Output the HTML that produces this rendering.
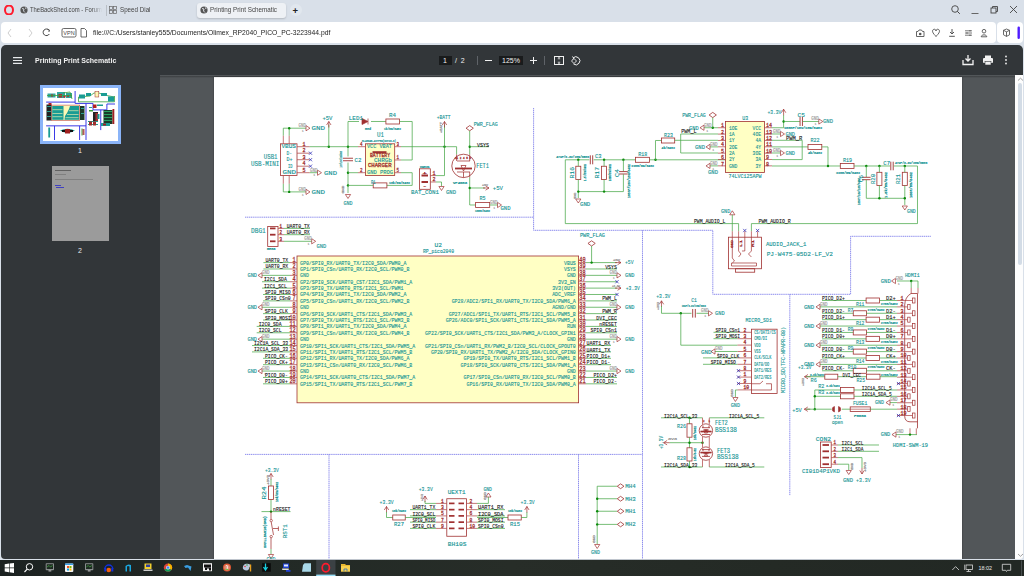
<!DOCTYPE html>
<html><head><meta charset="utf-8">
<style>
*{margin:0;padding:0;box-sizing:border-box}
html,body{width:1024px;height:576px;overflow:hidden;background:#d9e0e9;font-family:"Liberation Sans",sans-serif}
.abs{position:absolute}
#tabbar{left:0;top:0;width:1024px;height:22px;background:#d9e0e9}
#addr{left:1px;top:22px;width:995px;height:21px;background:#fff;border-radius:4px}
#addr2{left:997px;top:22px;width:26px;height:21px;background:#fff;border-radius:4px}
#tb{left:1px;top:45px;width:1022px;height:30.5px;background:#323639;border-radius:5px 5px 0 0}
#side{left:1px;top:75px;width:159px;height:483.8px;background:#323639;border-bottom-left-radius:4px}
#main{left:160px;top:75px;width:855px;height:483.8px;background:#525659}
#page{left:214px;top:77px;width:748px;height:481.8px;background:#fff;box-shadow:0 0 1.5px rgba(0,0,0,0.45)}
#scroll{left:1015px;top:75px;width:8px;height:484px;background:#fdfdfd;border-bottom-right-radius:3px}
#task{left:0;top:560px;width:1024px;height:16px;background:linear-gradient(90deg,#1c2221 0%,#232a26 30%,#272d28 50%,#242a25 75%,#222824 100%)}
.t{position:absolute;white-space:nowrap;line-height:1}
</style></head><body>
<div id="tabbar" class="abs"></div>
<!-- tabs -->
<svg class="abs" style="left:4px;top:5px" width="10" height="10" viewBox="0 0 10 10"><ellipse cx="5" cy="5" rx="4" ry="4.6" fill="none" stroke="#ff1b2d" stroke-width="2"/></svg>
<svg class="abs" style="left:20px;top:6px" width="8" height="8" viewBox="0 0 8 8"><circle cx="4" cy="4" r="3.6" fill="#555"/><path d="M2 2.5 L4 3 L3.5 5 L5 6.5 M5.5 1.5 L6 3" stroke="#dde3ea" stroke-width="0.9" fill="none"/></svg>
<div class="t" style="left:30px;top:6px;font-size:7px;color:#444;width:86px;overflow:hidden;transform:scaleX(0.84);transform-origin:0 0;-webkit-mask-image:linear-gradient(to right,#000 85%,transparent)">TheBackShed.com - Forum</div>
<div class="abs" style="left:106px;top:5px;width:1px;height:11px;background:#b9bfc6"></div>
<svg class="abs" style="left:109px;top:6px" width="8" height="8" viewBox="0 0 8 8"><rect x="0.5" y="0.5" width="3" height="3" fill="none" stroke="#666" stroke-width="0.7"/><rect x="4.5" y="0.5" width="3" height="3" fill="none" stroke="#666" stroke-width="0.7"/><rect x="0.5" y="4.5" width="3" height="3" fill="none" stroke="#666" stroke-width="0.7"/><rect x="4.5" y="4.5" width="3" height="3" fill="none" stroke="#666" stroke-width="0.7"/></svg>
<div class="t" style="left:119.5px;top:6px;font-size:7px;color:#444;transform:scaleX(0.89);transform-origin:0 0">Speed Dial</div>
<div class="abs" style="left:197px;top:3px;width:89px;height:15px;background:#eef1f5;border-radius:3px;box-shadow:0 1px 2px rgba(0,0,0,0.18)"></div>
<svg class="abs" style="left:200px;top:6px" width="8" height="8" viewBox="0 0 8 8"><circle cx="4" cy="4" r="3.6" fill="#555"/><path d="M2 2.5 L4 3 L3.5 5 L5 6.5 M5.5 1.5 L6 3" stroke="#eef1f5" stroke-width="0.9" fill="none"/></svg>
<div class="t" style="left:210px;top:6px;font-size:7px;color:#444;transform:scaleX(0.897);transform-origin:0 0">Printing Print Schematic</div>
<div class="abs" style="left:290px;top:4px;width:12px;height:12px;border-radius:6px;background:#e1e7ee"></div><div class="t" style="left:292.5px;top:5.5px;font-size:9.5px;color:#222;font-weight:bold">+</div>
<!-- window controls -->
<svg class="abs" style="left:950px;top:4px" width="70" height="12" viewBox="0 0 70 12"><circle cx="5" cy="5" r="3.3" fill="none" stroke="#444" stroke-width="0.9"/><path d="M7.4 7.4 L9.8 9.8" stroke="#444" stroke-width="1"/><path d="M21.5 9.5 H28.5" stroke="#666" stroke-width="1"/><rect x="41" y="4" width="5" height="5" fill="none" stroke="#444" stroke-width="0.9"/><path d="M42.5 4 V2.5 H47.5 V7.5 H46" fill="none" stroke="#444" stroke-width="0.9"/><path d="M60 2 L67 9 M67 2 L60 9" stroke="#444" stroke-width="0.9"/></svg>
<!-- address bar -->
<div id="addr" class="abs"></div>
<div id="addr2" class="abs"></div>
<svg class="abs" style="left:6px;top:27px" width="90" height="12" viewBox="0 0 90 12"><path d="M5 2 L2 6 L5 10" fill="none" stroke="#c8c8c8" stroke-width="0.9"/><path d="M23 2 L26 6 L23 10" fill="none" stroke="#c8c8c8" stroke-width="0.9"/><path d="M43 3.2 A3.3 3.3 0 1 0 43.3 7" fill="none" stroke="#444" stroke-width="1"/><path d="M41.5 2.2 L43.6 3.2 L42.8 5" fill="none" stroke="#444" stroke-width="0.9"/><rect x="56" y="1.5" width="14" height="8.5" rx="1.5" fill="none" stroke="#444" stroke-width="0.8"/><text x="63" y="8.3" font-size="5.5" text-anchor="middle" fill="#444" font-family="Liberation Sans">VPN</text><path d="M75 1.5 H78.5 L80.5 3.5 V10 H75 Z" fill="none" stroke="#444" stroke-width="0.8"/></svg>
<div class="t" style="left:93px;top:29px;font-size:7.2px;color:#222;transform:scaleX(0.94);transform-origin:0 0">file:///C:/Users/stanley555/Documents/Olimex_RP2040_PICO_PC-3223944.pdf</div>
<svg class="abs" style="left:912px;top:26px" width="110" height="14" viewBox="0 0 110 14"><path d="M4.5 5.5 H6 L7 4 H9.5 L10.5 5.5 H12 V10.5 H4.5 Z" fill="none" stroke="#555" stroke-width="0.9"/><circle cx="8.2" cy="8" r="1.3" fill="#555"/><path d="M20.5 5.2 C20.5 2.6,24 2.6,24 5 C24 2.6,27.5 2.6,27.5 5.2 C27.5 7.6,24 9.8,24 10.6 C24 9.8,20.5 7.6,20.5 5.2Z" fill="none" stroke="#555" stroke-width="0.9"/><path d="M40 3 V8 M38 6 L40 8 L42 6 M37.2 10.3 H42.8" fill="none" stroke="#555" stroke-width="1"/><path d="M53 4.8 H60 M53 7 H60 M53 9.2 H60" stroke="#555" stroke-width="0.8"/><circle cx="58" cy="4.8" r="0.7" fill="#555"/><circle cx="55" cy="7" r="0.7" fill="#555"/><circle cx="58" cy="9.2" r="0.7" fill="#555"/><circle cx="72" cy="5.2" r="1.8" fill="none" stroke="#555" stroke-width="0.9"/><path d="M69.2 10.8 C69.2 8.2,74.8 8.2,74.8 10.8 Z" fill="none" stroke="#555" stroke-width="0.9"/><path d="M91.5 4.3 L94.5 3 L97.5 4.3 V8.8 L94.5 10.4 L91.5 8.8Z M91.5 4.3 L94.5 5.8 L97.5 4.3 M94.5 5.8 V10.4" fill="none" stroke="#444" stroke-width="0.8"/><rect x="105.5" y="0.5" width="2.4" height="12.5" rx="1.2" fill="#4f1bff"/></svg>
<!-- pdf toolbar -->
<div id="tb" class="abs"></div>
<svg class="abs" style="left:13px;top:57px" width="9" height="7" viewBox="0 0 9 7"><path d="M0 0.6 H9 M0 3.5 H9 M0 6.4 H9" stroke="#e8eaed" stroke-width="1.1"/></svg>
<div class="t" style="left:35px;top:57px;font-size:8px;color:#f1f1f1;font-weight:bold;transform:scaleX(0.875);transform-origin:0 0">Printing Print Schematic</div>
<div class="abs" style="left:439px;top:56px;width:13px;height:9px;background:#191b1c"></div>
<div class="t" style="left:443px;top:57px;font-size:7px;color:#f1f1f1">1</div>
<div class="t" style="left:455px;top:57px;font-size:7px;color:#f1f1f1">/&nbsp;&nbsp;2</div>
<div class="abs" style="left:477px;top:56px;width:1px;height:9px;background:#5f6368"></div>
<div class="abs" style="left:485px;top:60px;width:7px;height:1px;background:#f1f1f1"></div>
<div class="abs" style="left:499px;top:56px;width:24px;height:9px;background:#191b1c"></div>
<div class="t" style="left:502px;top:57px;font-size:7px;color:#f1f1f1">125%</div>
<svg class="abs" style="left:529px;top:56px" width="9" height="9" viewBox="0 0 9 9"><path d="M4.5 1 V8 M1 4.5 H8" stroke="#f1f1f1" stroke-width="1"/></svg>
<div class="abs" style="left:544px;top:56px;width:1px;height:9px;background:#5f6368"></div>
<svg class="abs" style="left:553px;top:55px" width="30" height="11" viewBox="0 0 30 11"><rect x="1.5" y="1.5" width="9" height="8" fill="none" stroke="#f1f1f1" stroke-width="1"/><path d="M6 2.5 V4.5 M4.8 3.5 L6 2.5 L7.2 3.5 M6 8.5 V6.5 M4.8 7.5 L6 8.5 L7.2 7.5" stroke="#f1f1f1" stroke-width="0.8" fill="none"/><path d="M20 3 A4 4 0 1 1 20.5 9" fill="none" stroke="#f1f1f1" stroke-width="1"/><path d="M18.5 6 L21 3.5 L23.5 6 L21 8.5Z" fill="none" stroke="#f1f1f1" stroke-width="0.9"/><path d="M19 1.5 L21 3 L19.5 4.5" fill="none" stroke="#f1f1f1" stroke-width="0.8"/></svg>
<svg class="abs" style="left:962px;top:54px" width="50" height="12" viewBox="0 0 50 12"><path d="M1 6 V10.5 H11 V6" fill="none" stroke="#f1f1f1" stroke-width="1.3"/><path d="M6 1 V7 M3.5 4.5 L6 7 L8.5 4.5" fill="none" stroke="#f1f1f1" stroke-width="1.3"/><rect x="21" y="4" width="10" height="5" rx="1" fill="#f1f1f1"/><rect x="23" y="1.5" width="6" height="2.5" fill="#f1f1f1"/><rect x="23" y="7.5" width="6" height="3.5" fill="#f1f1f1" stroke="#323639" stroke-width="0.6"/><circle cx="44" cy="2.5" r="0.9" fill="#f1f1f1"/><circle cx="44" cy="6" r="0.9" fill="#f1f1f1"/><circle cx="44" cy="9.5" r="0.9" fill="#f1f1f1"/></svg>
<div id="side" class="abs"></div>
<div class="abs" style="left:40px;top:85px;width:81px;height:59px;background:#8ab4f8"></div>
<div class="abs" style="left:43px;top:88px;width:75px;height:53px;background:#fff"></div>
<svg class="abs" style="left:0;top:0" width="130" height="150" viewBox="0 0 130 150">
<g fill="none" stroke="#3b3be6" stroke-width="1">
<polyline points="75.1,91 75.1,103.4 93,103.4 93,109.9 106.9,109.9 106.9,104 115,104"/>
<line x1="46.1" y1="102.1" x2="75.1" y2="102.1"/>
<line x1="86" y1="103.4" x2="86" y2="140"/>
<line x1="100.75" y1="109.9" x2="100.75" y2="130.1"/>
<line x1="46.1" y1="125.85" x2="86" y2="125.85"/>
<line x1="54.5" y1="125.85" x2="54.5" y2="140"/>
<line x1="79.6" y1="125.85" x2="79.6" y2="140"/>
</g>
<rect x="51.5" y="105.1" width="28.2" height="15.5" fill="#fdf7b4" stroke="#c05050" stroke-width="0.6"/>
<path d="M52.2 106 H63.5 V119.8 H52.2Z" fill="#1a9c94"/>
<path d="M70 106 H79 V119.8 H64.5 L65 116 L67 113 L69 109Z" fill="#1a9c94"/>
<g fill="#fdf7b4"><rect x="52.5" y="109.5" width="10" height="0.6"/><rect x="52.5" y="113" width="10" height="0.6"/><rect x="52.5" y="116.5" width="10" height="0.6"/><rect x="69" y="110.5" width="9.5" height="0.6"/><rect x="67" y="114" width="11.5" height="0.6"/><rect x="65.5" y="117.5" width="13" height="0.6"/></g>
<rect x="46.5" y="104.5" width="4.8" height="16" fill="#222"/>
<rect x="47" y="106" width="4" height="1" fill="#2aa090"/><rect x="47" y="111" width="4" height="1" fill="#2aa090"/><rect x="47" y="116" width="4" height="1" fill="#2aa090"/>
<rect x="80" y="106" width="4.5" height="14" fill="#1e3a2a"/>
<rect x="81" y="108" width="3" height="1" fill="#2aa090"/><rect x="81" y="113" width="3" height="1" fill="#2aa090"/>
<rect x="48.5" y="103" width="3" height="2" fill="#b02020"/>
<g fill="#1a9c94" opacity="0.9"><rect x="47.5" y="93.5" width="8" height="4"/><rect x="57" y="92" width="8" height="6"/><rect x="66" y="93" width="6" height="5"/></g>
<g fill="#b03030"><circle cx="52" cy="95.5" r="1.2"/><rect x="58.5" y="94" width="3.5" height="3.5"/><circle cx="64.5" cy="96.5" r="1.2"/><circle cx="68" cy="96" r="1.1"/></g>
<g stroke="#3aa03a" stroke-width="0.8" fill="none"><polyline points="47,95.5 72,95.5"/><polyline points="63,93 70,92 72,99"/><polyline points="78.5,97 78.5,101.8 114.5,101.8 114.5,96"/><polyline points="78.5,97 90,96 94,93 99,93 104,95 114.5,97"/></g>
<g fill="#1a9c94"><rect x="79" y="94.5" width="6" height="4"/><rect x="86" y="93" width="5" height="3"/><rect x="101" y="93" width="6" height="3"/><rect x="108" y="96.5" width="6" height="5"/></g>
<rect x="95" y="91.5" width="3.8" height="5.5" fill="#fdf7b4" stroke="#a03030" stroke-width="0.5"/>
<rect x="93" y="104.5" width="3.5" height="3.5" fill="#b02020"/>
<rect x="97" y="104.5" width="6" height="1.5" fill="#1a9c94"/>
<rect x="89" y="107" width="3" height="1" fill="#2aa090"/>
<g fill="#1a3a2a"><rect x="103.5" y="110" width="9" height="14"/></g>
<g fill="#2aa060"><rect x="104" y="111" width="8" height="1"/><rect x="104" y="114" width="8" height="1"/><rect x="104" y="117" width="8" height="1"/><rect x="104" y="120" width="8" height="1"/></g>
<rect x="112.5" y="109" width="1.8" height="15" fill="#a02020"/>
<rect x="101" y="123" width="9" height="3" fill="#1a9c94"/>
<rect x="103" y="123.5" width="3" height="2" fill="#a02020"/>
<rect x="93" y="112" width="5" height="9" fill="#222"/><rect x="95.5" y="113" width="2.5" height="9" fill="#a03030"/>
<rect x="97.5" y="114" width="2" height="5" fill="#1a9c94"/>
<rect x="89" y="110" width="4" height="1.5" fill="#3aa03a"/>
<g fill="#1a9c94"><rect x="88" y="121" width="10" height="1"/><rect x="88" y="124" width="10" height="1"/></g>
<g fill="#a03030"><rect x="89" y="121.5" width="3" height="4"/><rect x="93" y="121.5" width="3" height="4"/></g>
<rect x="48.3" y="127.5" width="1.8" height="10" fill="#1a9c94"/>
<path d="M60 130.5 Q67.5 127 75 130.5 Q67.5 135 60 130.5Z" fill="#1a9c94"/>
<rect x="65" y="129" width="5" height="4.5" fill="#a02020"/><rect x="62" y="130" width="3" height="2" fill="#111"/><rect x="70" y="130" width="3" height="2" fill="#111"/>
<rect x="81.5" y="128.5" width="1" height="7" fill="#3aa03a"/><rect x="82.5" y="129" width="2" height="6" fill="#a03030" opacity="0.8"/>
</svg>
<div class="t" style="left:78px;top:147px;font-size:7px;color:#e8eaed">1</div>
<div class="abs" style="left:52px;top:166px;width:57px;height:75px;background:#9b9b9b"></div>
<div class="abs" style="left:55px;top:170px;width:16px;height:1px;background:#606060"></div>
<div class="abs" style="left:55px;top:174px;width:11px;height:0.6px;background:#808080"></div>
<div class="abs" style="left:55px;top:179px;width:38px;height:0.6px;background:#808080"></div>
<div class="abs" style="left:55px;top:185px;width:6px;height:0.8px;background:#4040c0"></div>
<div class="abs" style="left:56px;top:187px;width:8px;height:0.8px;background:#4040c0"></div>
<div class="t" style="left:78px;top:247px;font-size:7px;color:#e8eaed">2</div>
<div id="main" class="abs"></div>
<div id="scroll" class="abs"></div>
<div class="abs" style="left:1017.5px;top:83px;width:4px;height:182px;background:#d3dce6;border-radius:2px"></div>
<svg class="abs" style="left:1015px;top:77px" width="9" height="483" viewBox="0 0 9 483"><path d="M3 3.5 L5.5 1.2 L8 3.5" fill="none" stroke="#888" stroke-width="0.8"/><path d="M3 477 L5.5 479.3 L8 477" fill="none" stroke="#888" stroke-width="0.8"/></svg>
<div id="page" class="abs"></div>
<div class="abs" style="left:160px;top:75.5px;width:855px;height:2.5px;background:linear-gradient(rgba(0,0,0,0.28),rgba(0,0,0,0))"></div>
<svg class="abs" style="left:214px;top:77px" width="748" height="481.8" viewBox="214 77 748 481.8" font-family="Liberation Mono"><rect x="280.4" y="143.8" width="16.6" height="31.8" fill="none" stroke="#a03030" stroke-width="0.8"/>
<line x1="297" y1="146.7" x2="309.7" y2="146.7" stroke="#b04848" stroke-width="0.75"/>
<text x="302.5" y="145.8" font-size="5.76" fill="#a03030" stroke="#a03030" stroke-width="0.28" textLength="3" lengthAdjust="spacingAndGlyphs">1</text>
<line x1="297" y1="153.2" x2="309.7" y2="153.2" stroke="#b04848" stroke-width="0.75"/>
<text x="302.5" y="152.3" font-size="5.76" fill="#a03030" stroke="#a03030" stroke-width="0.28" textLength="3" lengthAdjust="spacingAndGlyphs">2</text>
<line x1="297" y1="159.7" x2="309.7" y2="159.7" stroke="#b04848" stroke-width="0.75"/>
<text x="302.5" y="158.8" font-size="5.76" fill="#a03030" stroke="#a03030" stroke-width="0.28" textLength="3" lengthAdjust="spacingAndGlyphs">3</text>
<line x1="297" y1="166.2" x2="309.7" y2="166.2" stroke="#b04848" stroke-width="0.75"/>
<text x="302.5" y="165.3" font-size="5.76" fill="#a03030" stroke="#a03030" stroke-width="0.28" textLength="3" lengthAdjust="spacingAndGlyphs">4</text>
<line x1="297" y1="172.7" x2="309.7" y2="172.7" stroke="#b04848" stroke-width="0.75"/>
<text x="302.5" y="171.8" font-size="5.76" fill="#a03030" stroke="#a03030" stroke-width="0.28" textLength="3" lengthAdjust="spacingAndGlyphs">5</text>
<text x="281.5" y="148.5" font-size="5.45" fill="#159494" stroke="#159494" stroke-width="0.12" textLength="14.5" lengthAdjust="spacingAndGlyphs">VBUS</text>
<text x="286.5" y="155" font-size="5.45" fill="#159494" stroke="#159494" stroke-width="0.12" textLength="5.5" lengthAdjust="spacingAndGlyphs">D-</text>
<text x="286.5" y="161.5" font-size="5.45" fill="#159494" stroke="#159494" stroke-width="0.12" textLength="6" lengthAdjust="spacingAndGlyphs">D+</text>
<text x="288" y="168" font-size="5.45" fill="#159494" stroke="#159494" stroke-width="0.12" textLength="4.5" lengthAdjust="spacingAndGlyphs">ID</text>
<text x="282.5" y="174.5" font-size="5.45" fill="#159494" stroke="#159494" stroke-width="0.12" textLength="13.5" lengthAdjust="spacingAndGlyphs">GND</text>
<path d="M308.9 151.6 L312.1 154.8 M312.1 151.6 L308.9 154.8" stroke="#2020b0" stroke-width="0.7"/>
<path d="M308.9 158.1 L312.1 161.3 M312.1 158.1 L308.9 161.3" stroke="#2020b0" stroke-width="0.7"/>
<path d="M308.9 164.6 L312.1 167.8 M312.1 164.6 L308.9 167.8" stroke="#2020b0" stroke-width="0.7"/>
<text x="263.8" y="159.1" font-size="7.27" fill="#159494" stroke="#159494" stroke-width="0.12" textLength="13.7" lengthAdjust="spacingAndGlyphs">USB1</text>
<text x="251" y="165.7" font-size="7.27" fill="#159494" stroke="#159494" stroke-width="0.12" textLength="28.4" lengthAdjust="spacingAndGlyphs">USB-MINI</text>
<line x1="283.3" y1="143.8" x2="283.3" y2="135.6" stroke="#b04848" stroke-width="0.75"/>
<line x1="283.3" y1="175.6" x2="283.3" y2="183.8" stroke="#b04848" stroke-width="0.75"/>
<text x="282.3" y="140" font-size="3.03" fill="#159494" stroke="#159494" stroke-width="0.25" textLength="2" lengthAdjust="spacingAndGlyphs"></text>
<line x1="289.2" y1="143.8" x2="289.2" y2="135.6" stroke="#b04848" stroke-width="0.75"/>
<line x1="289.2" y1="175.6" x2="289.2" y2="183.8" stroke="#b04848" stroke-width="0.75"/>
<text x="288.2" y="140" font-size="3.03" fill="#159494" stroke="#159494" stroke-width="0.25" textLength="2" lengthAdjust="spacingAndGlyphs"></text>
<polyline fill="none" points="283.3,135.6 283.3,128.2 306,128.2" stroke="#48a848" stroke-width="0.75"/>
<line x1="289.2" y1="135.6" x2="289.2" y2="128.2" stroke="#48a848" stroke-width="0.75"/>
<circle cx="289.2" cy="128.2" r="1.2" fill="#0a8a0a"/>
<path d="M306 125.6 L310 128.2 L306 130.8 Z" fill="none" stroke="#a03030" stroke-width="0.7"/>
<text x="298.5" y="127.1" font-size="4.55" fill="#9a9a9a" stroke="#9a9a9a" stroke-width="0.12" textLength="7.5" lengthAdjust="spacingAndGlyphs">GND</text>
<text x="302" y="132" font-size="3.64" fill="#9a9a9a" stroke="#9a9a9a" stroke-width="0.25" textLength="1.5" lengthAdjust="spacingAndGlyphs">1</text>
<text x="311.5" y="130.1" font-size="5.76" fill="#159494" stroke="#159494" stroke-width="0.12" textLength="13.5" lengthAdjust="spacingAndGlyphs">GND</text>
<polyline fill="none" points="283.3,183.8 283.3,191.9 306,191.9" stroke="#48a848" stroke-width="0.75"/>
<line x1="289.2" y1="183.8" x2="289.2" y2="191.9" stroke="#48a848" stroke-width="0.75"/>
<circle cx="289.2" cy="191.9" r="1.2" fill="#0a8a0a"/>
<path d="M306 189.3 L310 191.9 L306 194.5 Z" fill="none" stroke="#a03030" stroke-width="0.7"/>
<text x="298.5" y="190.8" font-size="4.55" fill="#9a9a9a" stroke="#9a9a9a" stroke-width="0.12" textLength="7.5" lengthAdjust="spacingAndGlyphs">GND</text>
<text x="302" y="195.7" font-size="3.64" fill="#9a9a9a" stroke="#9a9a9a" stroke-width="0.25" textLength="1.5" lengthAdjust="spacingAndGlyphs">1</text>
<text x="311.5" y="193.8" font-size="5.76" fill="#159494" stroke="#159494" stroke-width="0.12" textLength="13.5" lengthAdjust="spacingAndGlyphs">GND</text>
<line x1="309.7" y1="172.7" x2="317.5" y2="172.7" stroke="#48a848" stroke-width="0.75"/>
<path d="M317.5 170.1 L321.5 172.7 L317.5 175.3 Z" fill="none" stroke="#a03030" stroke-width="0.7"/>
<text x="310" y="171.6" font-size="4.55" fill="#9a9a9a" stroke="#9a9a9a" stroke-width="0.12" textLength="7.5" lengthAdjust="spacingAndGlyphs">GND</text>
<text x="313.5" y="176.5" font-size="3.64" fill="#9a9a9a" stroke="#9a9a9a" stroke-width="0.25" textLength="1.5" lengthAdjust="spacingAndGlyphs">1</text>
<text x="324" y="174.6" font-size="5.76" fill="#159494" stroke="#159494" stroke-width="0.12" textLength="13" lengthAdjust="spacingAndGlyphs">GND</text>
<line x1="309.7" y1="146.7" x2="358" y2="146.7" stroke="#48a848" stroke-width="0.75"/>
<circle cx="328.8" cy="146.7" r="1.2" fill="#0a8a0a"/>
<circle cx="348" cy="146.7" r="1.2" fill="#0a8a0a"/>
<line x1="328.8" y1="146.7" x2="328.8" y2="124.5" stroke="#48a848" stroke-width="0.75"/>
<path d="M326.6 125 L328.8 121.5 L331 125 M328.8 121.5 V127.5" fill="none" stroke="#a03030" stroke-width="0.7"/>
<text x="322.4" y="120.3" font-size="5.76" fill="#159494" stroke="#159494" stroke-width="0.12" textLength="10.1" lengthAdjust="spacingAndGlyphs">+5V</text>
<text x="326" y="128" font-size="3.03" fill="#159494" stroke="#159494" stroke-width="0.25" textLength="2" lengthAdjust="spacingAndGlyphs"></text>
<polyline fill="none" points="348,146.7 348,121.5 359,121.5" stroke="#48a848" stroke-width="0.75"/>
<path d="M362 118.5 L362 124.5 L368 121.5 Z M368 118.5 V124.5" fill="#a03030" stroke="#a03030" stroke-width="0.7"/>
<line x1="371" y1="121.5" x2="385.9" y2="121.5" stroke="#48a848" stroke-width="0.75"/>
<rect x="385.9" y="119" width="13.6" height="5" fill="none" stroke="#a03030" stroke-width="0.8"/>
<polyline fill="none" points="399.5,121.5 412.2,121.5 412.2,160 401,160" stroke="#48a848" stroke-width="0.75"/>
<text x="348.8" y="119.8" font-size="5.45" fill="#159494" stroke="#159494" stroke-width="0.12" textLength="14.2" lengthAdjust="spacingAndGlyphs">LED1</text>
<text x="389" y="117.1" font-size="5.45" fill="#159494" stroke="#159494" stroke-width="0.12" textLength="7" lengthAdjust="spacingAndGlyphs">R4</text>
<text x="384" y="129.6" font-size="3.33" fill="#159494" stroke="#159494" stroke-width="0.25" textLength="17" lengthAdjust="spacingAndGlyphs">1k/5%/0402</text>
<text x="365" y="129.6" font-size="3.33" fill="#159494" stroke="#159494" stroke-width="0.25" textLength="6" lengthAdjust="spacingAndGlyphs">Red</text>
<line x1="348" y1="146.7" x2="348" y2="156.5" stroke="#48a848" stroke-width="0.75"/>
<path d="M343 158.25 H353 M343 160.75 H353" stroke="#a03030" stroke-width="0.9"/>
<line x1="348" y1="162.5" x2="348" y2="185.4" stroke="#48a848" stroke-width="0.75"/>
<circle cx="348" cy="172.7" r="1.2" fill="#0a8a0a"/>
<circle cx="348" cy="185.4" r="1.2" fill="#0a8a0a"/>
<text x="354.6" y="161.6" font-size="6.06" fill="#159494" stroke="#159494" stroke-width="0.12" textLength="6.9" lengthAdjust="spacingAndGlyphs">C2</text>
<text transform="translate(341.65,167.5) rotate(-90)" x="0" y="0" font-size="3.48" fill="#159494" stroke="#159494" stroke-width="0.25" textLength="16.5" lengthAdjust="spacingAndGlyphs">1uF/6.3V/10%/0603</text>
<rect x="365.4" y="143.8" width="29.3" height="31.8" fill="#ffffc4" stroke="#a03030" stroke-width="0.8"/>
<text x="377" y="136.7" font-size="6.36" fill="#159494" stroke="#159494" stroke-width="0.12" textLength="7" lengthAdjust="spacingAndGlyphs">U1</text>
<text x="362" y="141.7" font-size="3.64" fill="#159494" stroke="#159494" stroke-width="0.25" textLength="34" lengthAdjust="spacingAndGlyphs">BL4054B-42TPRN(SOT23-5)</text>
<text x="367" y="148.5" font-size="5.45" fill="#159494" stroke="#159494" stroke-width="0.12" textLength="25" lengthAdjust="spacingAndGlyphs">VCC  VBAT</text>
<rect x="372.5" y="151.2" width="14" height="2" fill="#a03030"/>
<text x="370" y="157.2" font-size="5.15" fill="#a03030" stroke="#a03030" stroke-width="0.28" textLength="20" lengthAdjust="spacingAndGlyphs">BATTERY</text>
<text x="374" y="161.7" font-size="5.15" fill="#159494" stroke="#159494" stroke-width="0.12" textLength="18" lengthAdjust="spacingAndGlyphs">CHRGb</text>
<text x="368" y="166.7" font-size="5.15" fill="#a03030" stroke="#a03030" stroke-width="0.28" textLength="23.5" lengthAdjust="spacingAndGlyphs">CHARGER</text>
<text x="367" y="174.5" font-size="5.45" fill="#159494" stroke="#159494" stroke-width="0.12" textLength="26" lengthAdjust="spacingAndGlyphs">GND PROG</text>
<line x1="358" y1="146.7" x2="365.4" y2="146.7" stroke="#b04848" stroke-width="0.75"/>
<text x="360" y="145.9" font-size="5.76" fill="#a03030" stroke="#a03030" stroke-width="0.28" textLength="2.5" lengthAdjust="spacingAndGlyphs">4</text>
<line x1="348" y1="172.7" x2="358" y2="172.7" stroke="#48a848" stroke-width="0.75"/>
<line x1="358" y1="172.7" x2="365.4" y2="172.7" stroke="#b04848" stroke-width="0.75"/>
<text x="360" y="171.9" font-size="5.76" fill="#a03030" stroke="#a03030" stroke-width="0.28" textLength="2.5" lengthAdjust="spacingAndGlyphs">2</text>
<line x1="394.7" y1="146.7" x2="401" y2="146.7" stroke="#b04848" stroke-width="0.75"/>
<text x="396.5" y="145.9" font-size="5.76" fill="#a03030" stroke="#a03030" stroke-width="0.28" textLength="2.5" lengthAdjust="spacingAndGlyphs">3</text>
<line x1="394.7" y1="160" x2="401" y2="160" stroke="#b04848" stroke-width="0.75"/>
<text x="396.5" y="159.4" font-size="5.76" fill="#a03030" stroke="#a03030" stroke-width="0.28" textLength="2.5" lengthAdjust="spacingAndGlyphs">1</text>
<line x1="394.7" y1="172.7" x2="401" y2="172.7" stroke="#b04848" stroke-width="0.75"/>
<text x="396.5" y="171.9" font-size="5.76" fill="#a03030" stroke="#a03030" stroke-width="0.28" textLength="2.5" lengthAdjust="spacingAndGlyphs">5</text>
<polyline fill="none" points="401,172.7 412.2,172.7 412.2,185.4 386.9,185.4" stroke="#48a848" stroke-width="0.75"/>
<rect x="373.2" y="182.9" width="13.7" height="5" fill="none" stroke="#a03030" stroke-width="0.8"/>
<line x1="373.2" y1="185.4" x2="348" y2="185.4" stroke="#48a848" stroke-width="0.75"/>
<text x="371" y="183.7" font-size="5.15" fill="#159494" stroke="#159494" stroke-width="0.12" textLength="4.5" lengthAdjust="spacingAndGlyphs">R1</text>
<text x="389" y="183.6" font-size="3.33" fill="#159494" stroke="#159494" stroke-width="0.25" textLength="21" lengthAdjust="spacingAndGlyphs">10k/5%/0402</text>
<line x1="348" y1="185.4" x2="348" y2="193" stroke="#48a848" stroke-width="0.75"/>
<path d="M345.4 194.5 L348 198.5 L350.6 194.5 Z" fill="none" stroke="#a03030" stroke-width="0.7"/>
<text x="343.5" y="204.6" font-size="5.45" fill="#159494" stroke="#159494" stroke-width="0.12" textLength="9" lengthAdjust="spacingAndGlyphs">GND</text>
<text transform="translate(344.1,193.5) rotate(-90)" x="0" y="0" font-size="3.33" fill="#9a9a9a" stroke="#9a9a9a" stroke-width="0.25" textLength="8" lengthAdjust="spacingAndGlyphs">GND</text>
<polyline fill="none" points="401,146.7 456.6,146.7 456.6,154.5" stroke="#48a848" stroke-width="0.75"/>
<circle cx="444.5" cy="146.7" r="1.2" fill="#0a8a0a"/>
<line x1="444.5" y1="146.7" x2="444.5" y2="124.5" stroke="#48a848" stroke-width="0.75"/>
<path d="M442.3 125 L444.5 121.5 L446.7 125 M444.5 121.5 V127.5" fill="none" stroke="#a03030" stroke-width="0.7"/>
<text x="436.7" y="118.9" font-size="5.76" fill="#159494" stroke="#159494" stroke-width="0.12" textLength="13.9" lengthAdjust="spacingAndGlyphs">+BATT</text>
<text transform="translate(442.1,133) rotate(-90)" x="0" y="0" font-size="3.33" fill="#9a9a9a" stroke="#9a9a9a" stroke-width="0.25" textLength="11" lengthAdjust="spacingAndGlyphs">+BATT</text>
<polyline fill="none" points="444.5,146.7 444.5,175.6 436,175.6" stroke="#48a848" stroke-width="0.75"/>
<rect x="419.5" y="168.8" width="10.8" height="20.5" fill="none" stroke="#a03030" stroke-width="0.8"/>
<rect x="421.5" y="174.5" width="6.5" height="2" fill="#a03030"/><rect x="421.5" y="181" width="6.5" height="2" fill="#a03030"/>
<text x="422.5" y="173.75" font-size="3.79" fill="#a03030" stroke="#a03030" stroke-width="0.28" textLength="4.5" lengthAdjust="spacingAndGlyphs">+</text>
<text x="422.5" y="186.75" font-size="3.79" fill="#a03030" stroke="#a03030" stroke-width="0.28" textLength="4.5" lengthAdjust="spacingAndGlyphs">-</text>
<line x1="430.3" y1="175.6" x2="436" y2="175.6" stroke="#b04848" stroke-width="0.75"/>
<line x1="430.3" y1="182" x2="436" y2="182" stroke="#b04848" stroke-width="0.75"/>
<text x="432.5" y="174.9" font-size="5.76" fill="#a03030" stroke="#a03030" stroke-width="0.28" textLength="3" lengthAdjust="spacingAndGlyphs">1</text>
<text x="432.5" y="181.4" font-size="5.76" fill="#a03030" stroke="#a03030" stroke-width="0.28" textLength="3" lengthAdjust="spacingAndGlyphs">2</text>
<polyline fill="none" points="436,182 441.5,182 441.5,186" stroke="#48a848" stroke-width="0.75"/>
<path d="M438.9 186.5 L441.5 190.5 L444.1 186.5 Z" fill="none" stroke="#a03030" stroke-width="0.7"/>
<text x="411" y="193.9" font-size="6.06" fill="#159494" stroke="#159494" stroke-width="0.12" textLength="28" lengthAdjust="spacingAndGlyphs">BAT_CON1</text>
<text x="446" y="193.8" font-size="5.45" fill="#159494" stroke="#159494" stroke-width="0.12" textLength="10" lengthAdjust="spacingAndGlyphs">GND</text>
<text x="420" y="167.6" font-size="3.33" fill="#159494" stroke="#159494" stroke-width="0.25" textLength="9.5" lengthAdjust="spacingAndGlyphs">DW02S</text>
<path d="M466.06 128.2 L469.7 125.6 L473.34 128.2 L469.7 130.8 Z" fill="none" stroke="#a03030" stroke-width="0.8"/>
<text x="473.8" y="126.3" font-size="5.45" fill="#159494" stroke="#159494" stroke-width="0.12" textLength="23.9" lengthAdjust="spacingAndGlyphs">PWR_FLAG</text>
<line x1="469.7" y1="130.8" x2="469.7" y2="154.5" stroke="#48a848" stroke-width="0.75"/>
<line x1="469.7" y1="177.5" x2="469.7" y2="205" stroke="#48a848" stroke-width="0.75"/>
<circle cx="469.7" cy="146.7" r="1.2" fill="#0a8a0a"/>
<line x1="469.7" y1="146.7" x2="489" y2="146.7" stroke="#48a848" stroke-width="0.75"/>
<text x="477" y="146.8" font-size="5.45" fill="#1a1a1a" stroke="#1a1a1a" stroke-width="0.12" textLength="12" lengthAdjust="spacingAndGlyphs">VSYS</text>
<circle cx="463.5" cy="165.9" r="11.7" fill="none" stroke="#a03030" stroke-width="0.8"/>
<path d="M455 168.5 H472 M457 172 H470 M457 161 H470 M456.6 154.5 V161 M469.7 154.5 V161 M463.5 171 L461 165.5 H466 Z M463.5 172 V177.5 M469.7 172 V177.5" fill="none" stroke="#a03030" stroke-width="0.75"/>
<rect x="455" y="167.6" width="17" height="1.8" fill="#a03030"/>
<text x="455" y="158.6" font-size="3.33" fill="#a03030" stroke="#a03030" stroke-width="0.28" textLength="16" lengthAdjust="spacingAndGlyphs">S1 2 4 5 D</text>
<text x="476.2" y="168.1" font-size="6.36" fill="#159494" stroke="#159494" stroke-width="0.12" textLength="12.8" lengthAdjust="spacingAndGlyphs">FET1</text>
<text x="453" y="183.6" font-size="3.33" fill="#159494" stroke="#159494" stroke-width="0.25" textLength="14" lengthAdjust="spacingAndGlyphs">VP4503</text>
<circle cx="469.7" cy="188" r="1.2" fill="#0a8a0a"/>
<line x1="469.7" y1="188" x2="485" y2="188" stroke="#48a848" stroke-width="0.75"/>
<path d="M485.5 185.8 L489 188 L485.5 190.2 M489 188 H483" fill="none" stroke="#a03030" stroke-width="0.7"/>
<text x="492.8" y="189.9" font-size="5.76" fill="#159494" stroke="#159494" stroke-width="0.12" textLength="10.2" lengthAdjust="spacingAndGlyphs">+5V</text>
<text x="482" y="186.1" font-size="3.33" fill="#9a9a9a" stroke="#9a9a9a" stroke-width="0.25" textLength="6" lengthAdjust="spacingAndGlyphs">+5V</text>
<line x1="469.7" y1="205" x2="475.6" y2="205" stroke="#48a848" stroke-width="0.75"/>
<rect x="475.6" y="202.5" width="14.1" height="5" fill="none" stroke="#a03030" stroke-width="0.8"/>
<line x1="489.7" y1="205" x2="497.5" y2="205" stroke="#48a848" stroke-width="0.75"/>
<path d="M497.5 202.4 L501.5 205 L497.5 207.6 Z" fill="none" stroke="#a03030" stroke-width="0.7"/>
<text x="490" y="203.9" font-size="4.55" fill="#9a9a9a" stroke="#9a9a9a" stroke-width="0.12" textLength="7.5" lengthAdjust="spacingAndGlyphs">GND</text>
<text x="493.5" y="208.8" font-size="3.64" fill="#9a9a9a" stroke="#9a9a9a" stroke-width="0.25" textLength="1.5" lengthAdjust="spacingAndGlyphs">1</text>
<text x="479.5" y="199.8" font-size="5.45" fill="#159494" stroke="#159494" stroke-width="0.12" textLength="6" lengthAdjust="spacingAndGlyphs">R5</text>
<text x="500.5" y="209.8" font-size="5.45" fill="#159494" stroke="#159494" stroke-width="0.12" textLength="10" lengthAdjust="spacingAndGlyphs">GND</text>
<text x="475" y="211.6" font-size="3.33" fill="#159494" stroke="#159494" stroke-width="0.25" textLength="15" lengthAdjust="spacingAndGlyphs">100R/0402</text>
<polyline fill="none" points="245,217.2 533.6,217.2" stroke="#7070e8" stroke-width="0.8" stroke-dasharray="1.3 0.6"/>
<polyline fill="none" points="533.6,108 533.6,230.3 712.8,230.3 712.8,294.3 850.6,294.3 850.6,236.3 931,236.3" stroke="#7070e8" stroke-width="0.8" stroke-dasharray="1.3 0.6"/>
<polyline fill="none" points="642.5,230.3 642.5,560" stroke="#7070e8" stroke-width="0.8" stroke-dasharray="1.3 0.6"/>
<polyline fill="none" points="789.8,294.3 789.8,495.6" stroke="#7070e8" stroke-width="0.8" stroke-dasharray="1.3 0.6"/>
<polyline fill="none" points="245,454.4 642.5,454.4" stroke="#7070e8" stroke-width="0.8" stroke-dasharray="1.3 0.6"/>
<polyline fill="none" points="329,454.4 329,560" stroke="#7070e8" stroke-width="0.8" stroke-dasharray="1.3 0.6"/>
<polyline fill="none" points="578.5,454.4 578.5,560" stroke="#7070e8" stroke-width="0.8" stroke-dasharray="1.3 0.6"/>
<rect x="267.7" y="226.5" width="10.3" height="19.9" fill="none" stroke="#a03030" stroke-width="0.8"/>
<rect x="270" y="227.5" width="5.5" height="1.8" fill="#a03030"/>
<line x1="278" y1="228.4" x2="284" y2="228.4" stroke="#b04848" stroke-width="0.75"/>
<text x="279.5" y="227.7" font-size="4.55" fill="#a03030" stroke="#a03030" stroke-width="0.28" textLength="2.5" lengthAdjust="spacingAndGlyphs">1</text>
<rect x="270" y="233.8" width="5.5" height="1.8" fill="#a03030"/>
<line x1="278" y1="234.7" x2="284" y2="234.7" stroke="#b04848" stroke-width="0.75"/>
<text x="279.5" y="234" font-size="4.55" fill="#a03030" stroke="#a03030" stroke-width="0.28" textLength="2.5" lengthAdjust="spacingAndGlyphs">2</text>
<rect x="270" y="240.4" width="5.5" height="1.8" fill="#a03030"/>
<line x1="278" y1="241.3" x2="284" y2="241.3" stroke="#b04848" stroke-width="0.75"/>
<text x="279.5" y="240.6" font-size="4.55" fill="#a03030" stroke="#a03030" stroke-width="0.28" textLength="2.5" lengthAdjust="spacingAndGlyphs">3</text>
<text x="251.1" y="233.1" font-size="6.97" fill="#159494" stroke="#159494" stroke-width="0.12" textLength="14.7" lengthAdjust="spacingAndGlyphs">DBG1</text>
<text x="267" y="250.4" font-size="3.33" fill="#159494" stroke="#159494" stroke-width="0.25" textLength="8.5" lengthAdjust="spacingAndGlyphs">BH03</text>
<line x1="284" y1="228.4" x2="310" y2="228.4" stroke="#48a848" stroke-width="0.75"/>
<text x="286.7" y="228.2" font-size="5.45" fill="#1a1a1a" stroke="#1a1a1a" stroke-width="0.12" textLength="23" lengthAdjust="spacingAndGlyphs">UART0_TX</text>
<line x1="284" y1="234.7" x2="310" y2="234.7" stroke="#48a848" stroke-width="0.75"/>
<text x="286.7" y="234.5" font-size="5.45" fill="#1a1a1a" stroke="#1a1a1a" stroke-width="0.12" textLength="23" lengthAdjust="spacingAndGlyphs">UART0_RX</text>
<line x1="284" y1="241.3" x2="311.7" y2="241.3" stroke="#48a848" stroke-width="0.75"/>
<path d="M311.7 238.7 L315.7 241.3 L311.7 243.9 Z" fill="none" stroke="#a03030" stroke-width="0.7"/>
<text x="304.2" y="240.2" font-size="4.55" fill="#9a9a9a" stroke="#9a9a9a" stroke-width="0.12" textLength="7.5" lengthAdjust="spacingAndGlyphs">GND</text>
<text x="307.7" y="245.1" font-size="3.64" fill="#9a9a9a" stroke="#9a9a9a" stroke-width="0.25" textLength="1.5" lengthAdjust="spacingAndGlyphs">1</text>
<text x="316.5" y="247.8" font-size="5.45" fill="#159494" stroke="#159494" stroke-width="0.12" textLength="9.8" lengthAdjust="spacingAndGlyphs">GND</text>
<rect x="297" y="256" width="281.6" height="146.8" fill="#ffffc4" stroke="#a03030" stroke-width="0.8"/>
<text x="434.5" y="247.2" font-size="5.45" fill="#159494" stroke="#159494" stroke-width="0.12" textLength="7.5" lengthAdjust="spacingAndGlyphs">U2</text>
<text x="423" y="252.95" font-size="5.15" fill="#159494" stroke="#159494" stroke-width="0.12" textLength="31" lengthAdjust="spacingAndGlyphs">RP_pico2040</text>
<line x1="290" y1="262.6" x2="297" y2="262.6" stroke="#b04848" stroke-width="0.75"/>
<text x="292.5" y="262.1" font-size="6.36" fill="#a03030" stroke="#a03030" stroke-width="0.28" textLength="3.1" lengthAdjust="spacingAndGlyphs">1</text>
<text x="300" y="264.6" font-size="6.06" fill="#159494" stroke="#159494" stroke-width="0.12" textLength="106.4" lengthAdjust="spacingAndGlyphs">GP0/SPI0_RX/UART0_TX/I2C0_SDA/PWM0_A</text>
<line x1="263.4" y1="262.6" x2="290" y2="262.6" stroke="#48a848" stroke-width="0.75"/>
<text x="265.4" y="262.1" font-size="5.45" fill="#1a1a1a" stroke="#1a1a1a" stroke-width="0.12" textLength="22.8" lengthAdjust="spacingAndGlyphs">UART0_TX</text>
<line x1="578.6" y1="262.6" x2="586" y2="262.6" stroke="#b04848" stroke-width="0.75"/>
<text x="579.3" y="262.1" font-size="6.36" fill="#a03030" stroke="#a03030" stroke-width="0.28" textLength="6.2" lengthAdjust="spacingAndGlyphs">40</text>
<text x="563.98" y="264.6" font-size="6.06" fill="#159494" stroke="#159494" stroke-width="0.12" textLength="11.82" lengthAdjust="spacingAndGlyphs">VBUS</text>
<line x1="586" y1="262.6" x2="617" y2="262.6" stroke="#48a848" stroke-width="0.75"/>
<path d="M617.5 260.4 L621 262.6 L617.5 264.8 M621 262.6 H615" fill="none" stroke="#a03030" stroke-width="0.7"/>
<text x="625" y="264.5" font-size="5.76" fill="#159494" stroke="#159494" stroke-width="0.12" textLength="8.5" lengthAdjust="spacingAndGlyphs">+5V</text>
<text x="613" y="261.1" font-size="3.33" fill="#9a9a9a" stroke="#9a9a9a" stroke-width="0.25" textLength="7" lengthAdjust="spacingAndGlyphs">+5V</text>
<line x1="290" y1="268.98" x2="297" y2="268.98" stroke="#b04848" stroke-width="0.75"/>
<text x="292.5" y="268.48" font-size="6.36" fill="#a03030" stroke="#a03030" stroke-width="0.28" textLength="3.1" lengthAdjust="spacingAndGlyphs">2</text>
<text x="300" y="270.98" font-size="6.06" fill="#159494" stroke="#159494" stroke-width="0.12" textLength="109.36" lengthAdjust="spacingAndGlyphs">GP1/SPI0_CSn/UART0_RX/I2C0_SCL/PWM0_B</text>
<line x1="263.4" y1="268.98" x2="290" y2="268.98" stroke="#48a848" stroke-width="0.75"/>
<text x="265.4" y="268.48" font-size="5.45" fill="#1a1a1a" stroke="#1a1a1a" stroke-width="0.12" textLength="22.8" lengthAdjust="spacingAndGlyphs">UART0_RX</text>
<line x1="578.6" y1="268.98" x2="586" y2="268.98" stroke="#b04848" stroke-width="0.75"/>
<text x="579.3" y="268.48" font-size="6.36" fill="#a03030" stroke="#a03030" stroke-width="0.28" textLength="6.2" lengthAdjust="spacingAndGlyphs">39</text>
<text x="563.98" y="270.98" font-size="6.06" fill="#159494" stroke="#159494" stroke-width="0.12" textLength="11.82" lengthAdjust="spacingAndGlyphs">VSYS</text>
<line x1="586" y1="268.98" x2="617" y2="268.98" stroke="#48a848" stroke-width="0.75"/>
<text x="605.2" y="268.58" font-size="5.76" fill="#1a1a1a" stroke="#1a1a1a" stroke-width="0.12" textLength="11.7" lengthAdjust="spacingAndGlyphs">VSYS</text>
<line x1="290" y1="275.36" x2="297" y2="275.36" stroke="#b04848" stroke-width="0.75"/>
<text x="292.5" y="274.86" font-size="6.36" fill="#a03030" stroke="#a03030" stroke-width="0.28" textLength="3.1" lengthAdjust="spacingAndGlyphs">3</text>
<text x="300" y="277.36" font-size="6.06" fill="#159494" stroke="#159494" stroke-width="0.12" textLength="8.87" lengthAdjust="spacingAndGlyphs">GND</text>
<line x1="262" y1="275.36" x2="290" y2="275.36" stroke="#48a848" stroke-width="0.75"/>
<path d="M262 272.76 L258 275.36 L262 277.96 Z" fill="none" stroke="#a03030" stroke-width="0.7"/>
<text x="262" y="274.26" font-size="4.55" fill="#9a9a9a" stroke="#9a9a9a" stroke-width="0.12" textLength="7.5" lengthAdjust="spacingAndGlyphs">GND</text>
<text x="264.5" y="279.16" font-size="3.64" fill="#9a9a9a" stroke="#9a9a9a" stroke-width="0.25" textLength="1.5" lengthAdjust="spacingAndGlyphs">1</text>
<text x="247.5" y="277.26" font-size="5.76" fill="#159494" stroke="#159494" stroke-width="0.12" textLength="9.5" lengthAdjust="spacingAndGlyphs">GND</text>
<line x1="578.6" y1="275.36" x2="586" y2="275.36" stroke="#b04848" stroke-width="0.75"/>
<text x="579.3" y="274.86" font-size="6.36" fill="#a03030" stroke="#a03030" stroke-width="0.28" textLength="6.2" lengthAdjust="spacingAndGlyphs">38</text>
<text x="566.93" y="277.36" font-size="6.06" fill="#159494" stroke="#159494" stroke-width="0.12" textLength="8.87" lengthAdjust="spacingAndGlyphs">GND</text>
<line x1="586" y1="275.36" x2="617" y2="275.36" stroke="#48a848" stroke-width="0.75"/>
<path d="M617 272.76 L621 275.36 L617 277.96 Z" fill="none" stroke="#a03030" stroke-width="0.7"/>
<text x="609.5" y="274.26" font-size="4.55" fill="#9a9a9a" stroke="#9a9a9a" stroke-width="0.12" textLength="7.5" lengthAdjust="spacingAndGlyphs">GND</text>
<text x="613" y="279.16" font-size="3.64" fill="#9a9a9a" stroke="#9a9a9a" stroke-width="0.25" textLength="1.5" lengthAdjust="spacingAndGlyphs">1</text>
<text x="625" y="277.26" font-size="5.76" fill="#159494" stroke="#159494" stroke-width="0.12" textLength="9.5" lengthAdjust="spacingAndGlyphs">GND</text>
<line x1="290" y1="281.74" x2="297" y2="281.74" stroke="#b04848" stroke-width="0.75"/>
<text x="292.5" y="281.24" font-size="6.36" fill="#a03030" stroke="#a03030" stroke-width="0.28" textLength="3.1" lengthAdjust="spacingAndGlyphs">4</text>
<text x="300" y="283.74" font-size="6.06" fill="#159494" stroke="#159494" stroke-width="0.12" textLength="112.31" lengthAdjust="spacingAndGlyphs">GP2/SPI0_SCK/UART0_CST/I2C1_SDA/PWM1_A</text>
<line x1="262" y1="281.74" x2="290" y2="281.74" stroke="#48a848" stroke-width="0.75"/>
<text x="264" y="281.24" font-size="5.45" fill="#1a1a1a" stroke="#1a1a1a" stroke-width="0.12" textLength="22.8" lengthAdjust="spacingAndGlyphs">I2C1_SDA</text>
<line x1="578.6" y1="281.74" x2="586" y2="281.74" stroke="#b04848" stroke-width="0.75"/>
<text x="579.3" y="281.24" font-size="6.36" fill="#a03030" stroke="#a03030" stroke-width="0.28" textLength="6.2" lengthAdjust="spacingAndGlyphs">37</text>
<text x="558.07" y="283.74" font-size="6.06" fill="#159494" stroke="#159494" stroke-width="0.12" textLength="17.73" lengthAdjust="spacingAndGlyphs">3V3_EN</text>
<line x1="586" y1="281.74" x2="617" y2="281.74" stroke="#48a848" stroke-width="0.75"/>
<path d="M615.4 280.14 L618.6 283.34 M618.6 280.14 L615.4 283.34" stroke="#2020b0" stroke-width="0.7"/>
<line x1="290" y1="288.12" x2="297" y2="288.12" stroke="#b04848" stroke-width="0.75"/>
<text x="292.5" y="287.62" font-size="6.36" fill="#a03030" stroke="#a03030" stroke-width="0.28" textLength="3.1" lengthAdjust="spacingAndGlyphs">5</text>
<text x="300" y="290.12" font-size="6.06" fill="#159494" stroke="#159494" stroke-width="0.12" textLength="103.44" lengthAdjust="spacingAndGlyphs">GP3/SPI0_TX/UART0_RTS/I2C1_SCL/PWM1</text>
<line x1="262" y1="288.12" x2="290" y2="288.12" stroke="#48a848" stroke-width="0.75"/>
<text x="264" y="287.62" font-size="5.45" fill="#1a1a1a" stroke="#1a1a1a" stroke-width="0.12" textLength="22.8" lengthAdjust="spacingAndGlyphs">I2C1_SCL</text>
<line x1="578.6" y1="288.12" x2="586" y2="288.12" stroke="#b04848" stroke-width="0.75"/>
<text x="579.3" y="287.62" font-size="6.36" fill="#a03030" stroke="#a03030" stroke-width="0.28" textLength="6.2" lengthAdjust="spacingAndGlyphs">36</text>
<text x="552.16" y="290.12" font-size="6.06" fill="#159494" stroke="#159494" stroke-width="0.12" textLength="23.64" lengthAdjust="spacingAndGlyphs">3V3(OUT)</text>
<line x1="586" y1="288.12" x2="617" y2="288.12" stroke="#48a848" stroke-width="0.75"/>
<path d="M617.5 285.92 L621 288.12 L617.5 290.32 M621 288.12 H615" fill="none" stroke="#a03030" stroke-width="0.7"/>
<text x="625.8" y="290.02" font-size="5.76" fill="#159494" stroke="#159494" stroke-width="0.12" textLength="14" lengthAdjust="spacingAndGlyphs">+3.3V</text>
<text x="612" y="286.62" font-size="3.33" fill="#9a9a9a" stroke="#9a9a9a" stroke-width="0.25" textLength="8" lengthAdjust="spacingAndGlyphs">+3.3V</text>
<line x1="290" y1="294.5" x2="297" y2="294.5" stroke="#b04848" stroke-width="0.75"/>
<text x="292.5" y="294" font-size="6.36" fill="#a03030" stroke="#a03030" stroke-width="0.28" textLength="3.1" lengthAdjust="spacingAndGlyphs">6</text>
<text x="300" y="296.5" font-size="6.06" fill="#159494" stroke="#159494" stroke-width="0.12" textLength="106.4" lengthAdjust="spacingAndGlyphs">GP4/SPI0_RX/UART1_TX/I2C0_SDA/PWM2_A</text>
<line x1="263" y1="294.5" x2="290" y2="294.5" stroke="#48a848" stroke-width="0.75"/>
<text x="265" y="294" font-size="5.45" fill="#1a1a1a" stroke="#1a1a1a" stroke-width="0.12" textLength="25.65" lengthAdjust="spacingAndGlyphs">SPI0_MISO</text>
<line x1="578.6" y1="294.5" x2="586" y2="294.5" stroke="#b04848" stroke-width="0.75"/>
<text x="579.3" y="294" font-size="6.36" fill="#a03030" stroke="#a03030" stroke-width="0.28" textLength="6.2" lengthAdjust="spacingAndGlyphs">35</text>
<text x="552.16" y="296.5" font-size="6.06" fill="#159494" stroke="#159494" stroke-width="0.12" textLength="23.64" lengthAdjust="spacingAndGlyphs">ADC_VREF</text>
<line x1="586" y1="294.5" x2="617" y2="294.5" stroke="#48a848" stroke-width="0.75"/>
<path d="M615.4 292.9 L618.6 296.1 M618.6 292.9 L615.4 296.1" stroke="#2020b0" stroke-width="0.7"/>
<line x1="290" y1="300.88" x2="297" y2="300.88" stroke="#b04848" stroke-width="0.75"/>
<text x="292.5" y="300.38" font-size="6.36" fill="#a03030" stroke="#a03030" stroke-width="0.28" textLength="3.1" lengthAdjust="spacingAndGlyphs">7</text>
<text x="300" y="302.88" font-size="6.06" fill="#159494" stroke="#159494" stroke-width="0.12" textLength="109.36" lengthAdjust="spacingAndGlyphs">GP5/SPI0_CSn/UART1_RX/I2C0_SCL/PWM2_B</text>
<line x1="263" y1="300.88" x2="290" y2="300.88" stroke="#48a848" stroke-width="0.75"/>
<text x="265" y="300.38" font-size="5.45" fill="#1a1a1a" stroke="#1a1a1a" stroke-width="0.12" textLength="25.65" lengthAdjust="spacingAndGlyphs">SPI0_CSn0</text>
<line x1="578.6" y1="300.88" x2="586" y2="300.88" stroke="#b04848" stroke-width="0.75"/>
<text x="579.3" y="300.38" font-size="6.36" fill="#a03030" stroke="#a03030" stroke-width="0.28" textLength="6.2" lengthAdjust="spacingAndGlyphs">34</text>
<text x="451.67" y="302.88" font-size="6.06" fill="#159494" stroke="#159494" stroke-width="0.12" textLength="124.13" lengthAdjust="spacingAndGlyphs">GP28/ADC2/SPI1_RX/UART0_TX/I2C0_SDA/PWM6_A</text>
<line x1="586" y1="300.88" x2="617" y2="300.88" stroke="#48a848" stroke-width="0.75"/>
<text x="602.25" y="300.48" font-size="5.76" fill="#1a1a1a" stroke="#1a1a1a" stroke-width="0.12" textLength="14.65" lengthAdjust="spacingAndGlyphs">PWM_L</text>
<line x1="290" y1="307.26" x2="297" y2="307.26" stroke="#b04848" stroke-width="0.75"/>
<text x="292.5" y="306.76" font-size="6.36" fill="#a03030" stroke="#a03030" stroke-width="0.28" textLength="3.1" lengthAdjust="spacingAndGlyphs">8</text>
<text x="300" y="309.26" font-size="6.06" fill="#159494" stroke="#159494" stroke-width="0.12" textLength="8.87" lengthAdjust="spacingAndGlyphs">GND</text>
<line x1="262" y1="307.26" x2="290" y2="307.26" stroke="#48a848" stroke-width="0.75"/>
<path d="M262 304.66 L258 307.26 L262 309.86 Z" fill="none" stroke="#a03030" stroke-width="0.7"/>
<text x="262" y="306.16" font-size="4.55" fill="#9a9a9a" stroke="#9a9a9a" stroke-width="0.12" textLength="7.5" lengthAdjust="spacingAndGlyphs">GND</text>
<text x="264.5" y="311.06" font-size="3.64" fill="#9a9a9a" stroke="#9a9a9a" stroke-width="0.25" textLength="1.5" lengthAdjust="spacingAndGlyphs">1</text>
<text x="247.5" y="309.16" font-size="5.76" fill="#159494" stroke="#159494" stroke-width="0.12" textLength="9.5" lengthAdjust="spacingAndGlyphs">GND</text>
<line x1="578.6" y1="307.26" x2="586" y2="307.26" stroke="#b04848" stroke-width="0.75"/>
<text x="579.3" y="306.76" font-size="6.36" fill="#a03030" stroke="#a03030" stroke-width="0.28" textLength="6.2" lengthAdjust="spacingAndGlyphs">33</text>
<text x="552.16" y="309.26" font-size="6.06" fill="#159494" stroke="#159494" stroke-width="0.12" textLength="23.64" lengthAdjust="spacingAndGlyphs">AGND/GND</text>
<line x1="586" y1="307.26" x2="617" y2="307.26" stroke="#48a848" stroke-width="0.75"/>
<path d="M617 304.66 L621 307.26 L617 309.86 Z" fill="none" stroke="#a03030" stroke-width="0.7"/>
<text x="609.5" y="306.16" font-size="4.55" fill="#9a9a9a" stroke="#9a9a9a" stroke-width="0.12" textLength="7.5" lengthAdjust="spacingAndGlyphs">GND</text>
<text x="613" y="311.06" font-size="3.64" fill="#9a9a9a" stroke="#9a9a9a" stroke-width="0.25" textLength="1.5" lengthAdjust="spacingAndGlyphs">1</text>
<text x="625" y="309.16" font-size="5.76" fill="#159494" stroke="#159494" stroke-width="0.12" textLength="9.5" lengthAdjust="spacingAndGlyphs">GND</text>
<line x1="290" y1="313.64" x2="297" y2="313.64" stroke="#b04848" stroke-width="0.75"/>
<text x="292.5" y="313.14" font-size="6.36" fill="#a03030" stroke="#a03030" stroke-width="0.28" textLength="3.1" lengthAdjust="spacingAndGlyphs">9</text>
<text x="300" y="315.64" font-size="6.06" fill="#159494" stroke="#159494" stroke-width="0.12" textLength="112.31" lengthAdjust="spacingAndGlyphs">GP6/SPI0_SCK/UART1_CTS/I2C1_SDA/PWM3_A</text>
<line x1="263" y1="313.64" x2="290" y2="313.64" stroke="#48a848" stroke-width="0.75"/>
<text x="265" y="313.14" font-size="5.45" fill="#1a1a1a" stroke="#1a1a1a" stroke-width="0.12" textLength="22.8" lengthAdjust="spacingAndGlyphs">SPI0_CLK</text>
<line x1="578.6" y1="313.64" x2="586" y2="313.64" stroke="#b04848" stroke-width="0.75"/>
<text x="579.3" y="313.14" font-size="6.36" fill="#a03030" stroke="#a03030" stroke-width="0.28" textLength="6.2" lengthAdjust="spacingAndGlyphs">32</text>
<text x="448.71" y="315.64" font-size="6.06" fill="#159494" stroke="#159494" stroke-width="0.12" textLength="127.09" lengthAdjust="spacingAndGlyphs">GP27/ADC1/SPI1_TX/UART1_RTS/I2C1_SCL/PWM5_B</text>
<line x1="586" y1="313.64" x2="617" y2="313.64" stroke="#48a848" stroke-width="0.75"/>
<text x="602.25" y="313.24" font-size="5.76" fill="#1a1a1a" stroke="#1a1a1a" stroke-width="0.12" textLength="14.65" lengthAdjust="spacingAndGlyphs">PWM_R</text>
<line x1="290" y1="320.02" x2="297" y2="320.02" stroke="#b04848" stroke-width="0.75"/>
<text x="289.4" y="319.52" font-size="6.36" fill="#a03030" stroke="#a03030" stroke-width="0.28" textLength="6.2" lengthAdjust="spacingAndGlyphs">10</text>
<text x="300" y="322.02" font-size="6.06" fill="#159494" stroke="#159494" stroke-width="0.12" textLength="109.36" lengthAdjust="spacingAndGlyphs">GP7/SPI0_TX/UART1_RTS/I2C1_SCL/PWM3_B</text>
<line x1="263" y1="320.02" x2="290" y2="320.02" stroke="#48a848" stroke-width="0.75"/>
<text x="265" y="319.52" font-size="5.45" fill="#1a1a1a" stroke="#1a1a1a" stroke-width="0.12" textLength="25.65" lengthAdjust="spacingAndGlyphs">SPI0_MOSI</text>
<line x1="578.6" y1="320.02" x2="586" y2="320.02" stroke="#b04848" stroke-width="0.75"/>
<text x="579.3" y="319.52" font-size="6.36" fill="#a03030" stroke="#a03030" stroke-width="0.28" textLength="6.2" lengthAdjust="spacingAndGlyphs">31</text>
<text x="445.76" y="322.02" font-size="6.06" fill="#159494" stroke="#159494" stroke-width="0.12" textLength="130.04" lengthAdjust="spacingAndGlyphs">GP26/ADC0/SPI1_SCK/UART1_CTS/I2C1_SDA/PWM5_A</text>
<line x1="586" y1="320.02" x2="617" y2="320.02" stroke="#48a848" stroke-width="0.75"/>
<text x="596.35" y="319.62" font-size="5.76" fill="#1a1a1a" stroke="#1a1a1a" stroke-width="0.12" textLength="20.55" lengthAdjust="spacingAndGlyphs">DVI_CEC</text>
<line x1="290" y1="326.4" x2="297" y2="326.4" stroke="#b04848" stroke-width="0.75"/>
<text x="289.4" y="325.9" font-size="6.36" fill="#a03030" stroke="#a03030" stroke-width="0.28" textLength="6.2" lengthAdjust="spacingAndGlyphs">11</text>
<text x="300" y="328.4" font-size="6.06" fill="#159494" stroke="#159494" stroke-width="0.12" textLength="106.4" lengthAdjust="spacingAndGlyphs">GP8/SPI1_RX/UART1_TX/I2C0_SDA/PWM4_A</text>
<line x1="256.7" y1="326.4" x2="290" y2="326.4" stroke="#48a848" stroke-width="0.75"/>
<text x="258.7" y="325.9" font-size="5.45" fill="#1a1a1a" stroke="#1a1a1a" stroke-width="0.12" textLength="22.8" lengthAdjust="spacingAndGlyphs">I2C0_SDA</text>
<line x1="578.6" y1="326.4" x2="586" y2="326.4" stroke="#b04848" stroke-width="0.75"/>
<text x="579.3" y="325.9" font-size="6.36" fill="#a03030" stroke="#a03030" stroke-width="0.28" textLength="6.2" lengthAdjust="spacingAndGlyphs">30</text>
<text x="566.93" y="328.4" font-size="6.06" fill="#159494" stroke="#159494" stroke-width="0.12" textLength="8.87" lengthAdjust="spacingAndGlyphs">RUN</text>
<line x1="586" y1="326.4" x2="617" y2="326.4" stroke="#48a848" stroke-width="0.75"/>
<text x="599.3" y="326" font-size="5.76" fill="#1a1a1a" stroke="#1a1a1a" stroke-width="0.12" textLength="17.6" lengthAdjust="spacingAndGlyphs">nRESET</text>
<line x1="290" y1="332.78" x2="297" y2="332.78" stroke="#b04848" stroke-width="0.75"/>
<text x="289.4" y="332.28" font-size="6.36" fill="#a03030" stroke="#a03030" stroke-width="0.28" textLength="6.2" lengthAdjust="spacingAndGlyphs">12</text>
<text x="300" y="334.78" font-size="6.06" fill="#159494" stroke="#159494" stroke-width="0.12" textLength="109.36" lengthAdjust="spacingAndGlyphs">GP9/SPI1_CSn/UART1_RX/I2C0_SCL/PWM4_B</text>
<line x1="256.7" y1="332.78" x2="290" y2="332.78" stroke="#48a848" stroke-width="0.75"/>
<text x="258.7" y="332.28" font-size="5.45" fill="#1a1a1a" stroke="#1a1a1a" stroke-width="0.12" textLength="22.8" lengthAdjust="spacingAndGlyphs">I2C0_SCL</text>
<line x1="578.6" y1="332.78" x2="586" y2="332.78" stroke="#b04848" stroke-width="0.75"/>
<text x="579.3" y="332.28" font-size="6.36" fill="#a03030" stroke="#a03030" stroke-width="0.28" textLength="6.2" lengthAdjust="spacingAndGlyphs">29</text>
<text x="425.07" y="334.78" font-size="6.06" fill="#159494" stroke="#159494" stroke-width="0.12" textLength="150.73" lengthAdjust="spacingAndGlyphs">GP22/SPI0_SCK/UART1_CTS/I2C1_SDA/PWM3_A/CLOCK_GPIN1</text>
<line x1="586" y1="332.78" x2="617" y2="332.78" stroke="#48a848" stroke-width="0.75"/>
<text x="590.45" y="332.38" font-size="5.76" fill="#1a1a1a" stroke="#1a1a1a" stroke-width="0.12" textLength="26.45" lengthAdjust="spacingAndGlyphs">SPI0_CSn1</text>
<line x1="290" y1="339.16" x2="297" y2="339.16" stroke="#b04848" stroke-width="0.75"/>
<text x="289.4" y="338.66" font-size="6.36" fill="#a03030" stroke="#a03030" stroke-width="0.28" textLength="6.2" lengthAdjust="spacingAndGlyphs">13</text>
<text x="300" y="341.16" font-size="6.06" fill="#159494" stroke="#159494" stroke-width="0.12" textLength="8.87" lengthAdjust="spacingAndGlyphs">GND</text>
<line x1="262" y1="339.16" x2="290" y2="339.16" stroke="#48a848" stroke-width="0.75"/>
<path d="M262 336.56 L258 339.16 L262 341.76 Z" fill="none" stroke="#a03030" stroke-width="0.7"/>
<text x="262" y="338.06" font-size="4.55" fill="#9a9a9a" stroke="#9a9a9a" stroke-width="0.12" textLength="7.5" lengthAdjust="spacingAndGlyphs">GND</text>
<text x="264.5" y="342.96" font-size="3.64" fill="#9a9a9a" stroke="#9a9a9a" stroke-width="0.25" textLength="1.5" lengthAdjust="spacingAndGlyphs">1</text>
<text x="247.5" y="341.06" font-size="5.76" fill="#159494" stroke="#159494" stroke-width="0.12" textLength="9.5" lengthAdjust="spacingAndGlyphs">GND</text>
<line x1="578.6" y1="339.16" x2="586" y2="339.16" stroke="#b04848" stroke-width="0.75"/>
<text x="579.3" y="338.66" font-size="6.36" fill="#a03030" stroke="#a03030" stroke-width="0.28" textLength="6.2" lengthAdjust="spacingAndGlyphs">28</text>
<text x="566.93" y="341.16" font-size="6.06" fill="#159494" stroke="#159494" stroke-width="0.12" textLength="8.87" lengthAdjust="spacingAndGlyphs">GND</text>
<line x1="586" y1="339.16" x2="617" y2="339.16" stroke="#48a848" stroke-width="0.75"/>
<path d="M617 336.56 L621 339.16 L617 341.76 Z" fill="none" stroke="#a03030" stroke-width="0.7"/>
<text x="609.5" y="338.06" font-size="4.55" fill="#9a9a9a" stroke="#9a9a9a" stroke-width="0.12" textLength="7.5" lengthAdjust="spacingAndGlyphs">GND</text>
<text x="613" y="342.96" font-size="3.64" fill="#9a9a9a" stroke="#9a9a9a" stroke-width="0.25" textLength="1.5" lengthAdjust="spacingAndGlyphs">1</text>
<text x="625" y="341.06" font-size="5.76" fill="#159494" stroke="#159494" stroke-width="0.12" textLength="9.5" lengthAdjust="spacingAndGlyphs">GND</text>
<line x1="290" y1="345.54" x2="297" y2="345.54" stroke="#b04848" stroke-width="0.75"/>
<text x="289.4" y="345.04" font-size="6.36" fill="#a03030" stroke="#a03030" stroke-width="0.28" textLength="6.2" lengthAdjust="spacingAndGlyphs">14</text>
<text x="300" y="347.54" font-size="6.06" fill="#159494" stroke="#159494" stroke-width="0.12" textLength="115.27" lengthAdjust="spacingAndGlyphs">GP10/SPI1_SCK/UART1_CTS/I2C1_SDA/PWM5_A</text>
<line x1="252" y1="345.54" x2="290" y2="345.54" stroke="#48a848" stroke-width="0.75"/>
<text x="254" y="345.04" font-size="5.45" fill="#1a1a1a" stroke="#1a1a1a" stroke-width="0.12" textLength="34.2" lengthAdjust="spacingAndGlyphs">I2C1A_SCL_33</text>
<line x1="578.6" y1="345.54" x2="586" y2="345.54" stroke="#b04848" stroke-width="0.75"/>
<text x="579.3" y="345.04" font-size="6.36" fill="#a03030" stroke="#a03030" stroke-width="0.28" textLength="6.2" lengthAdjust="spacingAndGlyphs">27</text>
<text x="425.07" y="347.54" font-size="6.06" fill="#159494" stroke="#159494" stroke-width="0.12" textLength="150.73" lengthAdjust="spacingAndGlyphs">GP21/SPI0_CSn/UART1_RX/PWM2_B/I2C0_SCL/CLOCK_GPOUT0</text>
<line x1="586" y1="345.54" x2="611" y2="345.54" stroke="#48a848" stroke-width="0.75"/>
<text x="586.5" y="345.14" font-size="5.76" fill="#1a1a1a" stroke="#1a1a1a" stroke-width="0.12" textLength="23.6" lengthAdjust="spacingAndGlyphs">UART1_RX</text>
<line x1="290" y1="351.92" x2="297" y2="351.92" stroke="#b04848" stroke-width="0.75"/>
<text x="289.4" y="351.42" font-size="6.36" fill="#a03030" stroke="#a03030" stroke-width="0.28" textLength="6.2" lengthAdjust="spacingAndGlyphs">15</text>
<text x="300" y="353.92" font-size="6.06" fill="#159494" stroke="#159494" stroke-width="0.12" textLength="112.31" lengthAdjust="spacingAndGlyphs">GP11/SPI1_TX/UART1_RTS/I2C1_SCL/PWM5_B</text>
<line x1="252" y1="351.92" x2="290" y2="351.92" stroke="#48a848" stroke-width="0.75"/>
<text x="254" y="351.42" font-size="5.45" fill="#1a1a1a" stroke="#1a1a1a" stroke-width="0.12" textLength="34.2" lengthAdjust="spacingAndGlyphs">I2C1A_SDA_33</text>
<line x1="578.6" y1="351.92" x2="586" y2="351.92" stroke="#b04848" stroke-width="0.75"/>
<text x="579.3" y="351.42" font-size="6.36" fill="#a03030" stroke="#a03030" stroke-width="0.28" textLength="6.2" lengthAdjust="spacingAndGlyphs">26</text>
<text x="430.98" y="353.92" font-size="6.06" fill="#159494" stroke="#159494" stroke-width="0.12" textLength="144.82" lengthAdjust="spacingAndGlyphs">GP20/SPI0_RX/UART1_TX/PWM2_A/I2C0_SDA/CLOCK_GPIN0</text>
<line x1="586" y1="351.92" x2="611" y2="351.92" stroke="#48a848" stroke-width="0.75"/>
<text x="586.5" y="351.52" font-size="5.76" fill="#1a1a1a" stroke="#1a1a1a" stroke-width="0.12" textLength="23.6" lengthAdjust="spacingAndGlyphs">UART1_TX</text>
<line x1="290" y1="358.3" x2="297" y2="358.3" stroke="#b04848" stroke-width="0.75"/>
<text x="289.4" y="357.8" font-size="6.36" fill="#a03030" stroke="#a03030" stroke-width="0.28" textLength="6.2" lengthAdjust="spacingAndGlyphs">16</text>
<text x="300" y="360.3" font-size="6.06" fill="#159494" stroke="#159494" stroke-width="0.12" textLength="109.36" lengthAdjust="spacingAndGlyphs">GP12/SPI1_RX/UART0_TX/I2C0_SDA/PWM6_A</text>
<line x1="263" y1="358.3" x2="290" y2="358.3" stroke="#48a848" stroke-width="0.75"/>
<text x="265" y="357.8" font-size="5.45" fill="#1a1a1a" stroke="#1a1a1a" stroke-width="0.12" textLength="22.8" lengthAdjust="spacingAndGlyphs">PICO_CK-</text>
<line x1="578.6" y1="358.3" x2="586" y2="358.3" stroke="#b04848" stroke-width="0.75"/>
<text x="579.3" y="357.8" font-size="6.36" fill="#a03030" stroke="#a03030" stroke-width="0.28" textLength="6.2" lengthAdjust="spacingAndGlyphs">25</text>
<text x="463.49" y="360.3" font-size="6.06" fill="#159494" stroke="#159494" stroke-width="0.12" textLength="112.31" lengthAdjust="spacingAndGlyphs">GP19/SPI0_TX/UART0_RTS/I2C1_SCL/PWM1_B</text>
<line x1="586" y1="358.3" x2="611" y2="358.3" stroke="#48a848" stroke-width="0.75"/>
<text x="586.5" y="357.9" font-size="5.76" fill="#1a1a1a" stroke="#1a1a1a" stroke-width="0.12" textLength="23.6" lengthAdjust="spacingAndGlyphs">PICO_D1+</text>
<line x1="290" y1="364.68" x2="297" y2="364.68" stroke="#b04848" stroke-width="0.75"/>
<text x="289.4" y="364.18" font-size="6.36" fill="#a03030" stroke="#a03030" stroke-width="0.28" textLength="6.2" lengthAdjust="spacingAndGlyphs">17</text>
<text x="300" y="366.68" font-size="6.06" fill="#159494" stroke="#159494" stroke-width="0.12" textLength="112.31" lengthAdjust="spacingAndGlyphs">GP13/SPI1_CSn/UART0_RX/I2C0_SCL/PWM6_B</text>
<line x1="263" y1="364.68" x2="290" y2="364.68" stroke="#48a848" stroke-width="0.75"/>
<text x="265" y="364.18" font-size="5.45" fill="#1a1a1a" stroke="#1a1a1a" stroke-width="0.12" textLength="22.8" lengthAdjust="spacingAndGlyphs">PICO_CK+</text>
<line x1="578.6" y1="364.68" x2="586" y2="364.68" stroke="#b04848" stroke-width="0.75"/>
<text x="579.3" y="364.18" font-size="6.36" fill="#a03030" stroke="#a03030" stroke-width="0.28" textLength="6.2" lengthAdjust="spacingAndGlyphs">24</text>
<text x="460.53" y="366.68" font-size="6.06" fill="#159494" stroke="#159494" stroke-width="0.12" textLength="115.27" lengthAdjust="spacingAndGlyphs">GP18/SPI0_SCK/UART0_CTS/I2C1_SDA/PWM1_A</text>
<line x1="586" y1="364.68" x2="611" y2="364.68" stroke="#48a848" stroke-width="0.75"/>
<text x="586.5" y="364.28" font-size="5.76" fill="#1a1a1a" stroke="#1a1a1a" stroke-width="0.12" textLength="23.6" lengthAdjust="spacingAndGlyphs">PICO_D1-</text>
<line x1="290" y1="371.06" x2="297" y2="371.06" stroke="#b04848" stroke-width="0.75"/>
<text x="289.4" y="370.56" font-size="6.36" fill="#a03030" stroke="#a03030" stroke-width="0.28" textLength="6.2" lengthAdjust="spacingAndGlyphs">18</text>
<text x="300" y="373.06" font-size="6.06" fill="#159494" stroke="#159494" stroke-width="0.12" textLength="8.87" lengthAdjust="spacingAndGlyphs">GND</text>
<line x1="262" y1="371.06" x2="290" y2="371.06" stroke="#48a848" stroke-width="0.75"/>
<path d="M262 368.46 L258 371.06 L262 373.66 Z" fill="none" stroke="#a03030" stroke-width="0.7"/>
<text x="262" y="369.96" font-size="4.55" fill="#9a9a9a" stroke="#9a9a9a" stroke-width="0.12" textLength="7.5" lengthAdjust="spacingAndGlyphs">GND</text>
<text x="264.5" y="374.86" font-size="3.64" fill="#9a9a9a" stroke="#9a9a9a" stroke-width="0.25" textLength="1.5" lengthAdjust="spacingAndGlyphs">1</text>
<text x="247.5" y="372.96" font-size="5.76" fill="#159494" stroke="#159494" stroke-width="0.12" textLength="9.5" lengthAdjust="spacingAndGlyphs">GND</text>
<line x1="578.6" y1="371.06" x2="586" y2="371.06" stroke="#b04848" stroke-width="0.75"/>
<text x="579.3" y="370.56" font-size="6.36" fill="#a03030" stroke="#a03030" stroke-width="0.28" textLength="6.2" lengthAdjust="spacingAndGlyphs">23</text>
<text x="566.93" y="373.06" font-size="6.06" fill="#159494" stroke="#159494" stroke-width="0.12" textLength="8.87" lengthAdjust="spacingAndGlyphs">GND</text>
<line x1="586" y1="371.06" x2="617" y2="371.06" stroke="#48a848" stroke-width="0.75"/>
<path d="M617 368.46 L621 371.06 L617 373.66 Z" fill="none" stroke="#a03030" stroke-width="0.7"/>
<text x="609.5" y="369.96" font-size="4.55" fill="#9a9a9a" stroke="#9a9a9a" stroke-width="0.12" textLength="7.5" lengthAdjust="spacingAndGlyphs">GND</text>
<text x="613" y="374.86" font-size="3.64" fill="#9a9a9a" stroke="#9a9a9a" stroke-width="0.25" textLength="1.5" lengthAdjust="spacingAndGlyphs">1</text>
<text x="625" y="372.96" font-size="5.76" fill="#159494" stroke="#159494" stroke-width="0.12" textLength="9.5" lengthAdjust="spacingAndGlyphs">GND</text>
<line x1="290" y1="377.44" x2="297" y2="377.44" stroke="#b04848" stroke-width="0.75"/>
<text x="289.4" y="376.94" font-size="6.36" fill="#a03030" stroke="#a03030" stroke-width="0.28" textLength="6.2" lengthAdjust="spacingAndGlyphs">19</text>
<text x="300" y="379.44" font-size="6.06" fill="#159494" stroke="#159494" stroke-width="0.12" textLength="115.27" lengthAdjust="spacingAndGlyphs">GP14/SPI1_SCK/UART0_CTS/I2C1_SDA/PWM7_A</text>
<line x1="263" y1="377.44" x2="290" y2="377.44" stroke="#48a848" stroke-width="0.75"/>
<text x="265" y="376.94" font-size="5.45" fill="#1a1a1a" stroke="#1a1a1a" stroke-width="0.12" textLength="22.8" lengthAdjust="spacingAndGlyphs">PICO_D0-</text>
<line x1="578.6" y1="377.44" x2="586" y2="377.44" stroke="#b04848" stroke-width="0.75"/>
<text x="579.3" y="376.94" font-size="6.36" fill="#a03030" stroke="#a03030" stroke-width="0.28" textLength="6.2" lengthAdjust="spacingAndGlyphs">22</text>
<text x="463.49" y="379.44" font-size="6.06" fill="#159494" stroke="#159494" stroke-width="0.12" textLength="112.31" lengthAdjust="spacingAndGlyphs">GP17/SPI0_CSn/UART0_RX/I2C0_SCL/PWM0_B</text>
<line x1="586" y1="377.44" x2="617" y2="377.44" stroke="#48a848" stroke-width="0.75"/>
<text x="593.4" y="377.04" font-size="5.76" fill="#1a1a1a" stroke="#1a1a1a" stroke-width="0.12" textLength="23.5" lengthAdjust="spacingAndGlyphs">PICO_D2+</text>
<line x1="290" y1="383.82" x2="297" y2="383.82" stroke="#b04848" stroke-width="0.75"/>
<text x="289.4" y="383.32" font-size="6.36" fill="#a03030" stroke="#a03030" stroke-width="0.28" textLength="6.2" lengthAdjust="spacingAndGlyphs">20</text>
<text x="300" y="385.82" font-size="6.06" fill="#159494" stroke="#159494" stroke-width="0.12" textLength="112.31" lengthAdjust="spacingAndGlyphs">GP15/SPI1_TX/UART0_RTS/I2C1_SCL/PWM7_B</text>
<line x1="263" y1="383.82" x2="290" y2="383.82" stroke="#48a848" stroke-width="0.75"/>
<text x="265" y="383.32" font-size="5.45" fill="#1a1a1a" stroke="#1a1a1a" stroke-width="0.12" textLength="22.8" lengthAdjust="spacingAndGlyphs">PICO_D0+</text>
<line x1="578.6" y1="383.82" x2="586" y2="383.82" stroke="#b04848" stroke-width="0.75"/>
<text x="579.3" y="383.32" font-size="6.36" fill="#a03030" stroke="#a03030" stroke-width="0.28" textLength="6.2" lengthAdjust="spacingAndGlyphs">21</text>
<text x="466.44" y="385.82" font-size="6.06" fill="#159494" stroke="#159494" stroke-width="0.12" textLength="109.36" lengthAdjust="spacingAndGlyphs">GP16/SPI0_RX/UART0_TX/I2C0_SDA/PWM0_A</text>
<line x1="586" y1="383.82" x2="617" y2="383.82" stroke="#48a848" stroke-width="0.75"/>
<text x="593.4" y="383.42" font-size="5.76" fill="#1a1a1a" stroke="#1a1a1a" stroke-width="0.12" textLength="23.5" lengthAdjust="spacingAndGlyphs">PICO_D2-</text>
<path d="M587.96 243.4 L591.6 240.8 L595.24 243.4 L591.6 246 Z" fill="none" stroke="#a03030" stroke-width="0.8"/>
<text x="580" y="237.3" font-size="5.15" fill="#159494" stroke="#159494" stroke-width="0.12" textLength="25" lengthAdjust="spacingAndGlyphs">PWR_FLAG</text>
<line x1="591.6" y1="246" x2="591.6" y2="262.6" stroke="#48a848" stroke-width="0.75"/>
<circle cx="591.6" cy="262.6" r="1.2" fill="#0a8a0a"/>
<polyline fill="none" points="565.3,223.6 565.3,159.8 589.3,159.8" stroke="#48a848" stroke-width="0.75"/>
<path d="M590.3 155.3 V164.3 M592.7 155.3 V164.3" stroke="#a03030" stroke-width="0.9"/>
<line x1="593.7" y1="159.8" x2="635.6" y2="159.8" stroke="#48a848" stroke-width="0.75"/>
<rect x="635.6" y="157.3" width="13.8" height="5" fill="none" stroke="#a03030" stroke-width="0.8"/>
<line x1="649.4" y1="159.8" x2="725.6" y2="159.8" stroke="#48a848" stroke-width="0.75"/>
<circle cx="578.3" cy="159.8" r="1.2" fill="#0a8a0a"/>
<circle cx="604.1" cy="159.8" r="1.2" fill="#0a8a0a"/>
<circle cx="623.4" cy="159.8" r="1.2" fill="#0a8a0a"/>
<circle cx="655.5" cy="159.8" r="1.2" fill="#0a8a0a"/>
<text x="556.25" y="157.6" font-size="3.33" fill="#159494" stroke="#159494" stroke-width="0.25" textLength="32.75" lengthAdjust="spacingAndGlyphs">47uF/6.3V/20%/0805</text>
<text x="595" y="158.3" font-size="5.76" fill="#159494" stroke="#159494" stroke-width="0.12" textLength="6.5" lengthAdjust="spacingAndGlyphs">C3</text>
<rect x="575.8" y="166.25" width="5" height="13.25" fill="none" stroke="#a03030" stroke-width="0.8"/>
<line x1="578.3" y1="159.8" x2="578.3" y2="166.25" stroke="#48a848" stroke-width="0.75"/>
<line x1="578.3" y1="179.5" x2="578.3" y2="198" stroke="#48a848" stroke-width="0.75"/>
<rect x="601.6" y="166.25" width="5" height="13.25" fill="none" stroke="#a03030" stroke-width="0.8"/>
<line x1="604.1" y1="159.8" x2="604.1" y2="166.25" stroke="#48a848" stroke-width="0.75"/>
<line x1="604.1" y1="179.5" x2="604.1" y2="191.6" stroke="#48a848" stroke-width="0.75"/>
<text transform="translate(573.7,178.5) rotate(-90)" x="0" y="0" font-size="5.45" fill="#159494" stroke="#159494" stroke-width="0.12" textLength="11.5" lengthAdjust="spacingAndGlyphs">R16</text>
<text transform="translate(585.9,181) rotate(-90)" x="0" y="0" font-size="3.33" fill="#159494" stroke="#159494" stroke-width="0.25" textLength="17" lengthAdjust="spacingAndGlyphs">1.8k/5%/0402</text>
<text transform="translate(599.3,178.5) rotate(-90)" x="0" y="0" font-size="5.45" fill="#159494" stroke="#159494" stroke-width="0.12" textLength="11.5" lengthAdjust="spacingAndGlyphs">R17</text>
<text transform="translate(611.5,181) rotate(-90)" x="0" y="0" font-size="3.33" fill="#159494" stroke="#159494" stroke-width="0.25" textLength="17" lengthAdjust="spacingAndGlyphs">100R/5%/0402</text>
<line x1="623.4" y1="159.8" x2="623.4" y2="171.4" stroke="#48a848" stroke-width="0.75"/>
<path d="M619.1 171.6 H627.7 M619.1 174 H627.7" stroke="#a03030" stroke-width="0.9"/>
<polyline fill="none" points="623.4,174.2 623.4,191.6 578.3,191.6" stroke="#48a848" stroke-width="0.75"/>
<text transform="translate(618.7,177) rotate(-90)" x="0" y="0" font-size="5.45" fill="#159494" stroke="#159494" stroke-width="0.12" textLength="8" lengthAdjust="spacingAndGlyphs">C4</text>
<text transform="translate(630.5,198) rotate(-90)" x="0" y="0" font-size="3.33" fill="#159494" stroke="#159494" stroke-width="0.25" textLength="34" lengthAdjust="spacingAndGlyphs">100nF/10V/10%/0402</text>
<circle cx="578.3" cy="191.6" r="1.2" fill="#0a8a0a"/>
<circle cx="604.1" cy="191.6" r="1.2" fill="#0a8a0a"/>
<path d="M575.7 199 L578.3 203 L580.9 199 Z" fill="none" stroke="#a03030" stroke-width="0.7"/>
<text x="580" y="206.3" font-size="5.45" fill="#159494" stroke="#159494" stroke-width="0.12" textLength="10.3" lengthAdjust="spacingAndGlyphs">GND</text>
<text transform="translate(575.6,199) rotate(-90)" x="0" y="0" font-size="3.33" fill="#9a9a9a" stroke="#9a9a9a" stroke-width="0.25" textLength="6.5" lengthAdjust="spacingAndGlyphs">GND</text>
<text x="638.3" y="155.65" font-size="5.76" fill="#159494" stroke="#159494" stroke-width="0.12" textLength="9" lengthAdjust="spacingAndGlyphs">R18</text>
<text x="631.25" y="167.35" font-size="3.33" fill="#159494" stroke="#159494" stroke-width="0.25" textLength="22.75" lengthAdjust="spacingAndGlyphs">220R/5%/0402</text>
<polyline fill="none" points="655.5,159.8 655.5,140.5 661.5,140.5" stroke="#48a848" stroke-width="0.75"/>
<rect x="661.5" y="138" width="13.2" height="5" fill="none" stroke="#a03030" stroke-width="0.8"/>
<line x1="674.7" y1="140.3" x2="718" y2="140.3" stroke="#48a848" stroke-width="0.75"/>
<text x="664" y="136.6" font-size="5.76" fill="#159494" stroke="#159494" stroke-width="0.12" textLength="8.9" lengthAdjust="spacingAndGlyphs">R23</text>
<text x="661.5" y="148.6" font-size="3.33" fill="#159494" stroke="#159494" stroke-width="0.25" textLength="13.3" lengthAdjust="spacingAndGlyphs">4k/0402</text>
<rect x="725.6" y="121.4" width="38.8" height="51.2" fill="#ffffc4" stroke="#a03030" stroke-width="0.8"/>
<text x="742.3" y="120.4" font-size="5.76" fill="#159494" stroke="#159494" stroke-width="0.12" textLength="5.9" lengthAdjust="spacingAndGlyphs">U3</text>
<text x="728.5" y="177.9" font-size="5.76" fill="#159494" stroke="#159494" stroke-width="0.12" textLength="33" lengthAdjust="spacingAndGlyphs">74LVC125APW</text>
<line x1="718" y1="127.75" x2="725.6" y2="127.75" stroke="#b04848" stroke-width="0.75"/>
<line x1="764.4" y1="127.75" x2="772" y2="127.75" stroke="#b04848" stroke-width="0.75"/>
<text x="721" y="127.45" font-size="5.76" fill="#a03030" stroke="#a03030" stroke-width="0.28" textLength="3" lengthAdjust="spacingAndGlyphs">1</text>
<text x="766" y="127.45" font-size="5.76" fill="#a03030" stroke="#a03030" stroke-width="0.28" textLength="6" lengthAdjust="spacingAndGlyphs">14</text>
<text x="729" y="129.65" font-size="5.76" fill="#159494" stroke="#159494" stroke-width="0.12" textLength="8.4" lengthAdjust="spacingAndGlyphs">1OE</text>
<text x="752.6" y="129.65" font-size="5.76" fill="#159494" stroke="#159494" stroke-width="0.12" textLength="8.4" lengthAdjust="spacingAndGlyphs">VCC</text>
<line x1="718" y1="134.1" x2="725.6" y2="134.1" stroke="#b04848" stroke-width="0.75"/>
<line x1="764.4" y1="134.1" x2="772" y2="134.1" stroke="#b04848" stroke-width="0.75"/>
<text x="721" y="133.8" font-size="5.76" fill="#a03030" stroke="#a03030" stroke-width="0.28" textLength="3" lengthAdjust="spacingAndGlyphs">2</text>
<text x="766" y="133.8" font-size="5.76" fill="#a03030" stroke="#a03030" stroke-width="0.28" textLength="6" lengthAdjust="spacingAndGlyphs">13</text>
<text x="729" y="136" font-size="5.76" fill="#159494" stroke="#159494" stroke-width="0.12" textLength="5.6" lengthAdjust="spacingAndGlyphs">1A</text>
<text x="752.6" y="136" font-size="5.76" fill="#159494" stroke="#159494" stroke-width="0.12" textLength="8.4" lengthAdjust="spacingAndGlyphs">4OE</text>
<line x1="718" y1="140.45" x2="725.6" y2="140.45" stroke="#b04848" stroke-width="0.75"/>
<line x1="764.4" y1="140.45" x2="772" y2="140.45" stroke="#b04848" stroke-width="0.75"/>
<text x="721" y="140.15" font-size="5.76" fill="#a03030" stroke="#a03030" stroke-width="0.28" textLength="3" lengthAdjust="spacingAndGlyphs">3</text>
<text x="766" y="140.15" font-size="5.76" fill="#a03030" stroke="#a03030" stroke-width="0.28" textLength="6" lengthAdjust="spacingAndGlyphs">12</text>
<text x="729" y="142.35" font-size="5.76" fill="#159494" stroke="#159494" stroke-width="0.12" textLength="5.6" lengthAdjust="spacingAndGlyphs">1Y</text>
<text x="755.4" y="142.35" font-size="5.76" fill="#159494" stroke="#159494" stroke-width="0.12" textLength="5.6" lengthAdjust="spacingAndGlyphs">4A</text>
<line x1="718" y1="146.8" x2="725.6" y2="146.8" stroke="#b04848" stroke-width="0.75"/>
<line x1="764.4" y1="146.8" x2="772" y2="146.8" stroke="#b04848" stroke-width="0.75"/>
<text x="721" y="146.5" font-size="5.76" fill="#a03030" stroke="#a03030" stroke-width="0.28" textLength="3" lengthAdjust="spacingAndGlyphs">4</text>
<text x="766" y="146.5" font-size="5.76" fill="#a03030" stroke="#a03030" stroke-width="0.28" textLength="6" lengthAdjust="spacingAndGlyphs">11</text>
<text x="729" y="148.7" font-size="5.76" fill="#159494" stroke="#159494" stroke-width="0.12" textLength="8.4" lengthAdjust="spacingAndGlyphs">2OE</text>
<text x="755.4" y="148.7" font-size="5.76" fill="#159494" stroke="#159494" stroke-width="0.12" textLength="5.6" lengthAdjust="spacingAndGlyphs">4Y</text>
<line x1="718" y1="153.15" x2="725.6" y2="153.15" stroke="#b04848" stroke-width="0.75"/>
<line x1="764.4" y1="153.15" x2="772" y2="153.15" stroke="#b04848" stroke-width="0.75"/>
<text x="721" y="152.85" font-size="5.76" fill="#a03030" stroke="#a03030" stroke-width="0.28" textLength="3" lengthAdjust="spacingAndGlyphs">5</text>
<text x="766" y="152.85" font-size="5.76" fill="#a03030" stroke="#a03030" stroke-width="0.28" textLength="6" lengthAdjust="spacingAndGlyphs">10</text>
<text x="729" y="155.05" font-size="5.76" fill="#159494" stroke="#159494" stroke-width="0.12" textLength="5.6" lengthAdjust="spacingAndGlyphs">2A</text>
<text x="752.6" y="155.05" font-size="5.76" fill="#159494" stroke="#159494" stroke-width="0.12" textLength="8.4" lengthAdjust="spacingAndGlyphs">3OE</text>
<line x1="718" y1="159.5" x2="725.6" y2="159.5" stroke="#b04848" stroke-width="0.75"/>
<line x1="764.4" y1="159.5" x2="772" y2="159.5" stroke="#b04848" stroke-width="0.75"/>
<text x="721" y="159.2" font-size="5.76" fill="#a03030" stroke="#a03030" stroke-width="0.28" textLength="3" lengthAdjust="spacingAndGlyphs">6</text>
<text x="766" y="159.2" font-size="5.76" fill="#a03030" stroke="#a03030" stroke-width="0.28" textLength="3" lengthAdjust="spacingAndGlyphs">9</text>
<text x="729" y="161.4" font-size="5.76" fill="#159494" stroke="#159494" stroke-width="0.12" textLength="5.6" lengthAdjust="spacingAndGlyphs">2Y</text>
<text x="755.4" y="161.4" font-size="5.76" fill="#159494" stroke="#159494" stroke-width="0.12" textLength="5.6" lengthAdjust="spacingAndGlyphs">3A</text>
<line x1="718" y1="165.85" x2="725.6" y2="165.85" stroke="#b04848" stroke-width="0.75"/>
<line x1="764.4" y1="165.85" x2="772" y2="165.85" stroke="#b04848" stroke-width="0.75"/>
<text x="721" y="165.55" font-size="5.76" fill="#a03030" stroke="#a03030" stroke-width="0.28" textLength="3" lengthAdjust="spacingAndGlyphs">7</text>
<text x="766" y="165.55" font-size="5.76" fill="#a03030" stroke="#a03030" stroke-width="0.28" textLength="3" lengthAdjust="spacingAndGlyphs">8</text>
<text x="729" y="167.75" font-size="5.76" fill="#159494" stroke="#159494" stroke-width="0.12" textLength="8.4" lengthAdjust="spacingAndGlyphs">GND</text>
<text x="755.4" y="167.75" font-size="5.76" fill="#159494" stroke="#159494" stroke-width="0.12" textLength="5.6" lengthAdjust="spacingAndGlyphs">3Y</text>
<line x1="712.75" y1="127.75" x2="718" y2="127.75" stroke="#48a848" stroke-width="0.75"/>
<line x1="704" y1="127.75" x2="712.75" y2="127.75" stroke="#48a848" stroke-width="0.75"/>
<path d="M704 125.15 L700 127.75 L704 130.35 Z" fill="none" stroke="#a03030" stroke-width="0.7"/>
<text x="704" y="126.65" font-size="4.55" fill="#9a9a9a" stroke="#9a9a9a" stroke-width="0.12" textLength="7.5" lengthAdjust="spacingAndGlyphs">GND</text>
<text x="706.5" y="131.55" font-size="3.64" fill="#9a9a9a" stroke="#9a9a9a" stroke-width="0.25" textLength="1.5" lengthAdjust="spacingAndGlyphs">1</text>
<circle cx="712.75" cy="127.75" r="1.2" fill="#0a8a0a"/>
<text x="689" y="129.65" font-size="5.76" fill="#159494" stroke="#159494" stroke-width="0.12" textLength="9.7" lengthAdjust="spacingAndGlyphs">GND</text>
<path d="M709.11 115 L712.75 112.4 L716.39 115 L712.75 117.6 Z" fill="none" stroke="#a03030" stroke-width="0.8"/>
<line x1="712.75" y1="117.6" x2="712.75" y2="127.75" stroke="#48a848" stroke-width="0.75"/>
<text x="682.2" y="116.8" font-size="5.45" fill="#159494" stroke="#159494" stroke-width="0.12" textLength="23.6" lengthAdjust="spacingAndGlyphs">PWR_FLAG</text>
<polyline fill="none" points="718,134 680.7,134 680.7,153 718,153" stroke="#48a848" stroke-width="0.75"/>
<text x="681.3" y="133.5" font-size="5.45" fill="#1a1a1a" stroke="#1a1a1a" stroke-width="0.12" textLength="15.2" lengthAdjust="spacingAndGlyphs">PWM_L</text>
<line x1="710" y1="146.9" x2="718" y2="146.9" stroke="#48a848" stroke-width="0.75"/>
<path d="M710 144.3 L706 146.9 L710 149.5 Z" fill="none" stroke="#a03030" stroke-width="0.7"/>
<text x="710" y="145.8" font-size="4.55" fill="#9a9a9a" stroke="#9a9a9a" stroke-width="0.12" textLength="7.5" lengthAdjust="spacingAndGlyphs">GND</text>
<text x="712.5" y="150.7" font-size="3.64" fill="#9a9a9a" stroke="#9a9a9a" stroke-width="0.25" textLength="1.5" lengthAdjust="spacingAndGlyphs">1</text>
<text x="695" y="148.8" font-size="5.76" fill="#159494" stroke="#159494" stroke-width="0.12" textLength="10" lengthAdjust="spacingAndGlyphs">GND</text>
<line x1="710" y1="165.9" x2="718" y2="165.9" stroke="#48a848" stroke-width="0.75"/>
<path d="M710 163.3 L706 165.9 L710 168.5 Z" fill="none" stroke="#a03030" stroke-width="0.7"/>
<text x="710" y="164.8" font-size="4.55" fill="#9a9a9a" stroke="#9a9a9a" stroke-width="0.12" textLength="7.5" lengthAdjust="spacingAndGlyphs">GND</text>
<text x="712.5" y="169.7" font-size="3.64" fill="#9a9a9a" stroke="#9a9a9a" stroke-width="0.25" textLength="1.5" lengthAdjust="spacingAndGlyphs">1</text>
<text x="708" y="174.2" font-size="5.76" fill="#159494" stroke="#159494" stroke-width="0.12" textLength="10" lengthAdjust="spacingAndGlyphs">GND</text>
<line x1="772" y1="127.75" x2="783.6" y2="127.75" stroke="#48a848" stroke-width="0.75"/>
<line x1="783.6" y1="127.75" x2="783.6" y2="115" stroke="#48a848" stroke-width="0.75"/>
<path d="M781.4 112.7 L783.6 109.2 L785.8 112.7 M783.6 109.2 V115.2" fill="none" stroke="#a03030" stroke-width="0.7"/>
<text x="767.4" y="114" font-size="5.76" fill="#159494" stroke="#159494" stroke-width="0.12" textLength="14" lengthAdjust="spacingAndGlyphs">+3.3V</text>
<circle cx="783.6" cy="121.5" r="1.2" fill="#0a8a0a"/>
<line x1="783.6" y1="121.5" x2="800" y2="121.5" stroke="#48a848" stroke-width="0.75"/>
<path d="M800.05 117 V126 M802.45 117 V126" stroke="#a03030" stroke-width="0.9"/>
<line x1="802.5" y1="121.5" x2="818.8" y2="121.5" stroke="#48a848" stroke-width="0.75"/>
<path d="M818.8 118.9 L822.8 121.5 L818.8 124.1 Z" fill="none" stroke="#a03030" stroke-width="0.7"/>
<text x="811.3" y="120.4" font-size="4.55" fill="#9a9a9a" stroke="#9a9a9a" stroke-width="0.12" textLength="7.5" lengthAdjust="spacingAndGlyphs">GND</text>
<text x="814.8" y="125.3" font-size="3.64" fill="#9a9a9a" stroke="#9a9a9a" stroke-width="0.25" textLength="1.5" lengthAdjust="spacingAndGlyphs">1</text>
<text x="823" y="123.4" font-size="5.76" fill="#159494" stroke="#159494" stroke-width="0.12" textLength="10" lengthAdjust="spacingAndGlyphs">GND</text>
<text x="797.5" y="116.9" font-size="5.76" fill="#159494" stroke="#159494" stroke-width="0.12" textLength="7.5" lengthAdjust="spacingAndGlyphs">C5</text>
<text x="784" y="128.9" font-size="3.33" fill="#159494" stroke="#159494" stroke-width="0.25" textLength="38" lengthAdjust="spacingAndGlyphs">100nF/10V/10%/0402</text>
<line x1="772" y1="134" x2="780.5" y2="134" stroke="#48a848" stroke-width="0.75"/>
<path d="M780.5 131.4 L784.5 134 L780.5 136.6 Z" fill="none" stroke="#a03030" stroke-width="0.7"/>
<text x="773" y="132.9" font-size="4.55" fill="#9a9a9a" stroke="#9a9a9a" stroke-width="0.12" textLength="7.5" lengthAdjust="spacingAndGlyphs">GND</text>
<text x="776.5" y="137.8" font-size="3.64" fill="#9a9a9a" stroke="#9a9a9a" stroke-width="0.25" textLength="1.5" lengthAdjust="spacingAndGlyphs">1</text>
<text x="785.5" y="136.1" font-size="5.76" fill="#159494" stroke="#159494" stroke-width="0.12" textLength="9.5" lengthAdjust="spacingAndGlyphs">GND</text>
<polyline fill="none" points="772,140.3 802.2,140.3 802.2,159.6 772,159.6" stroke="#48a848" stroke-width="0.75"/>
<text x="786" y="139.8" font-size="5.45" fill="#1a1a1a" stroke="#1a1a1a" stroke-width="0.12" textLength="16.2" lengthAdjust="spacingAndGlyphs">PWM_R</text>
<line x1="772" y1="146.9" x2="808" y2="146.9" stroke="#48a848" stroke-width="0.75"/>
<rect x="808" y="144.4" width="13.8" height="5" fill="none" stroke="#a03030" stroke-width="0.8"/>
<polyline fill="none" points="821.8,146.9 828,146.9 828,166" stroke="#48a848" stroke-width="0.75"/>
<text x="810.5" y="141.9" font-size="5.76" fill="#159494" stroke="#159494" stroke-width="0.12" textLength="9" lengthAdjust="spacingAndGlyphs">R22</text>
<text x="808" y="154.1" font-size="3.33" fill="#159494" stroke="#159494" stroke-width="0.25" textLength="14" lengthAdjust="spacingAndGlyphs">4k/0402</text>
<line x1="772" y1="153" x2="780.5" y2="153" stroke="#48a848" stroke-width="0.75"/>
<path d="M780.5 150.4 L784.5 153 L780.5 155.6 Z" fill="none" stroke="#a03030" stroke-width="0.7"/>
<text x="773" y="151.9" font-size="4.55" fill="#9a9a9a" stroke="#9a9a9a" stroke-width="0.12" textLength="7.5" lengthAdjust="spacingAndGlyphs">GND</text>
<text x="776.5" y="156.8" font-size="3.64" fill="#9a9a9a" stroke="#9a9a9a" stroke-width="0.25" textLength="1.5" lengthAdjust="spacingAndGlyphs">1</text>
<text x="785.5" y="155.1" font-size="5.76" fill="#159494" stroke="#159494" stroke-width="0.12" textLength="9.5" lengthAdjust="spacingAndGlyphs">GND</text>
<line x1="772" y1="166" x2="840.3" y2="166" stroke="#48a848" stroke-width="0.75"/>
<rect x="840.3" y="163.5" width="13.7" height="5" fill="none" stroke="#a03030" stroke-width="0.8"/>
<line x1="854" y1="166" x2="890.2" y2="166" stroke="#48a848" stroke-width="0.75"/>
<path d="M890.8 161.7 V170.3 M893.2 161.7 V170.3" stroke="#a03030" stroke-width="0.9"/>
<polyline fill="none" points="893.8,166 917.5,166 917.5,223.6" stroke="#48a848" stroke-width="0.75"/>
<circle cx="828" cy="166" r="1.2" fill="#0a8a0a"/>
<text x="843" y="161.9" font-size="5.76" fill="#159494" stroke="#159494" stroke-width="0.12" textLength="9" lengthAdjust="spacingAndGlyphs">R19</text>
<text x="836" y="173.8" font-size="3.33" fill="#159494" stroke="#159494" stroke-width="0.25" textLength="24" lengthAdjust="spacingAndGlyphs">220R/5%/0402</text>
<circle cx="866.3" cy="166" r="1.2" fill="#0a8a0a"/>
<circle cx="879.4" cy="166" r="1.2" fill="#0a8a0a"/>
<circle cx="904.8" cy="166" r="1.2" fill="#0a8a0a"/>
<line x1="866.3" y1="166" x2="866.3" y2="177" stroke="#48a848" stroke-width="0.75"/>
<path d="M862 177.3 H870.6 M862 179.7 H870.6" stroke="#a03030" stroke-width="0.9"/>
<line x1="866.3" y1="180" x2="866.3" y2="198.3" stroke="#48a848" stroke-width="0.75"/>
<text transform="translate(862.8,182) rotate(-90)" x="0" y="0" font-size="5.45" fill="#159494" stroke="#159494" stroke-width="0.12" textLength="7" lengthAdjust="spacingAndGlyphs">C6</text>
<text transform="translate(859.9,205) rotate(-90)" x="0" y="0" font-size="3.33" fill="#159494" stroke="#159494" stroke-width="0.25" textLength="27" lengthAdjust="spacingAndGlyphs">100nF/10V/10%/0402</text>
<rect x="876.9" y="172.3" width="5" height="13.1" fill="none" stroke="#a03030" stroke-width="0.8"/>
<line x1="879.4" y1="166" x2="879.4" y2="172.3" stroke="#48a848" stroke-width="0.75"/>
<line x1="879.4" y1="185.4" x2="879.4" y2="198.3" stroke="#48a848" stroke-width="0.75"/>
<text transform="translate(875.3,184) rotate(-90)" x="0" y="0" font-size="5.45" fill="#159494" stroke="#159494" stroke-width="0.12" textLength="10" lengthAdjust="spacingAndGlyphs">R20</text>
<text transform="translate(887.1,198) rotate(-90)" x="0" y="0" font-size="3.33" fill="#159494" stroke="#159494" stroke-width="0.25" textLength="26" lengthAdjust="spacingAndGlyphs">1.8k/5%/0402</text>
<rect x="902.3" y="172.3" width="5" height="13.1" fill="none" stroke="#a03030" stroke-width="0.8"/>
<line x1="904.8" y1="166" x2="904.8" y2="172.3" stroke="#48a848" stroke-width="0.75"/>
<line x1="904.8" y1="185.4" x2="904.8" y2="205" stroke="#48a848" stroke-width="0.75"/>
<text transform="translate(900.3,184) rotate(-90)" x="0" y="0" font-size="5.45" fill="#159494" stroke="#159494" stroke-width="0.12" textLength="10" lengthAdjust="spacingAndGlyphs">R21</text>
<text transform="translate(912.1,198) rotate(-90)" x="0" y="0" font-size="3.33" fill="#159494" stroke="#159494" stroke-width="0.25" textLength="26" lengthAdjust="spacingAndGlyphs">100R/5%/0402</text>
<line x1="866.3" y1="198.3" x2="904.8" y2="198.3" stroke="#48a848" stroke-width="0.75"/>
<circle cx="879.4" cy="198.3" r="1.2" fill="#0a8a0a"/>
<circle cx="904.8" cy="198.3" r="1.2" fill="#0a8a0a"/>
<path d="M902.2 206 L904.8 210 L907.4 206 Z" fill="none" stroke="#a03030" stroke-width="0.7"/>
<text x="907" y="212.9" font-size="5.45" fill="#159494" stroke="#159494" stroke-width="0.12" textLength="8.8" lengthAdjust="spacingAndGlyphs">GND</text>
<text x="883.3" y="164.9" font-size="5.76" fill="#159494" stroke="#159494" stroke-width="0.12" textLength="6.7" lengthAdjust="spacingAndGlyphs">C7</text>
<text x="895" y="164.1" font-size="3.33" fill="#159494" stroke="#159494" stroke-width="0.25" textLength="32.2" lengthAdjust="spacingAndGlyphs">47uF/6.3V/20%/0805</text>
<polyline fill="none" points="565.3,223.6 738.6,223.6 738.6,231.25" stroke="#48a848" stroke-width="0.75"/>
<polyline fill="none" points="751.4,231.25 751.4,223.6 917.5,223.6" stroke="#48a848" stroke-width="0.75"/>
<text x="694" y="222.8" font-size="5.45" fill="#1a1a1a" stroke="#1a1a1a" stroke-width="0.12" textLength="31.4" lengthAdjust="spacingAndGlyphs">PWM_AUDIO_L</text>
<text x="758.5" y="222.8" font-size="5.45" fill="#1a1a1a" stroke="#1a1a1a" stroke-width="0.12" textLength="32.2" lengthAdjust="spacingAndGlyphs">PWM_AUDIO_R</text>
<path d="M729.7 214.8 L732.3 210.8 L734.9 214.8 Z" fill="none" stroke="#a03030" stroke-width="0.7"/>
<line x1="732.3" y1="214.8" x2="732.3" y2="231.25" stroke="#48a848" stroke-width="0.75"/>
<text x="721" y="213.15" font-size="5.76" fill="#159494" stroke="#159494" stroke-width="0.12" textLength="9.3" lengthAdjust="spacingAndGlyphs">GND</text>
<path d="M743.2 228.9 L746.4 232.1 M746.4 228.9 L743.2 232.1" stroke="#2020b0" stroke-width="0.7"/>
<path d="M756 228.9 L759.2 232.1 M759.2 228.9 L756 232.1" stroke="#2020b0" stroke-width="0.7"/>
<line x1="732.3" y1="231.25" x2="732.3" y2="237.2" stroke="#b04848" stroke-width="0.75"/>
<line x1="738.6" y1="231.25" x2="738.6" y2="237.2" stroke="#b04848" stroke-width="0.75"/>
<line x1="744.8" y1="231.25" x2="744.8" y2="237.2" stroke="#b04848" stroke-width="0.75"/>
<line x1="751.4" y1="231.25" x2="751.4" y2="237.2" stroke="#b04848" stroke-width="0.75"/>
<line x1="757.6" y1="231.25" x2="757.6" y2="237.2" stroke="#b04848" stroke-width="0.75"/>
<rect x="728.4" y="237.2" width="33.2" height="31.55" fill="none" stroke="#a03030" stroke-width="0.8"/>
<rect x="735.5" y="268.75" width="19.2" height="3.45" fill="none" stroke="#a03030" stroke-width="0.8"/>
<path d="M732.3 237.2 V258 L734.5 261 L732.3 263 M738.6 237.2 V251 L741 254 L738.6 257 M744.8 237.2 V251 L742 251 M751.4 237.2 V251 L748.5 254 L751.4 257 M731.5 263 H756.5 V266 H731.5 Z" fill="none" stroke="#a03030" stroke-width="0.7"/>
<text transform="translate(733.5,248) rotate(-90)" x="0" y="0" font-size="3.64" fill="#a03030" stroke="#a03030" stroke-width="0.25" textLength="8" lengthAdjust="spacingAndGlyphs">GND</text>
<text transform="translate(742,247) rotate(-90)" x="0" y="0" font-size="3.64" fill="#a03030" stroke="#a03030" stroke-width="0.25" textLength="7" lengthAdjust="spacingAndGlyphs">L1</text>
<text transform="translate(754.2,247) rotate(-90)" x="0" y="0" font-size="3.64" fill="#a03030" stroke="#a03030" stroke-width="0.25" textLength="7" lengthAdjust="spacingAndGlyphs">R1</text>
<text x="766" y="246.5" font-size="6.06" fill="#159494" stroke="#159494" stroke-width="0.12" textLength="40.25" lengthAdjust="spacingAndGlyphs">AUDIO_JACK_1</text>
<text x="766.7" y="255.6" font-size="6.06" fill="#159494" stroke="#159494" stroke-width="0.12" textLength="66.3" lengthAdjust="spacingAndGlyphs">PJ-W475-05D2-LF_V2</text>
<path d="M659.3 304.3 L661.5 300.8 L663.7 304.3 M661.5 300.8 V306.8" fill="none" stroke="#a03030" stroke-width="0.7"/>
<text x="656.25" y="297.7" font-size="5.76" fill="#159494" stroke="#159494" stroke-width="0.12" textLength="14.15" lengthAdjust="spacingAndGlyphs">+3.3V</text>
<text transform="translate(659.1,310) rotate(-90)" x="0" y="0" font-size="3.33" fill="#9a9a9a" stroke="#9a9a9a" stroke-width="0.25" textLength="8" lengthAdjust="spacingAndGlyphs">+3V3</text>
<polyline fill="none" points="661.5,306 661.5,313.3 691.5,313.3" stroke="#48a848" stroke-width="0.75"/>
<path d="M692.7 309 V317.6 M695.3 309 V317.6" stroke="#a03030" stroke-width="0.9"/>
<line x1="696.5" y1="313.3" x2="708.5" y2="313.3" stroke="#48a848" stroke-width="0.75"/>
<path d="M708.5 310.7 L712.5 313.3 L708.5 315.9 Z" fill="none" stroke="#a03030" stroke-width="0.7"/>
<text x="701" y="312.2" font-size="4.55" fill="#9a9a9a" stroke="#9a9a9a" stroke-width="0.12" textLength="7.5" lengthAdjust="spacingAndGlyphs">GND</text>
<text x="704.5" y="317.1" font-size="3.64" fill="#9a9a9a" stroke="#9a9a9a" stroke-width="0.25" textLength="1.5" lengthAdjust="spacingAndGlyphs">1</text>
<circle cx="680.8" cy="313.3" r="1.2" fill="#0a8a0a"/>
<text x="715" y="315.2" font-size="5.76" fill="#159494" stroke="#159494" stroke-width="0.12" textLength="9.6" lengthAdjust="spacingAndGlyphs">GND</text>
<text x="691.25" y="302.3" font-size="5.76" fill="#159494" stroke="#159494" stroke-width="0.12" textLength="5.65" lengthAdjust="spacingAndGlyphs">C1</text>
<text x="681.7" y="306.7" font-size="3.33" fill="#159494" stroke="#159494" stroke-width="0.25" textLength="24.1" lengthAdjust="spacingAndGlyphs">10uF/6.3V/20%/0603</text>
<polyline fill="none" points="680.8,313.3 680.8,345.2 737.5,345.2" stroke="#48a848" stroke-width="0.75"/>
<rect x="751.5" y="329.2" width="25.6" height="64.3" fill="none" stroke="#a03030" stroke-width="0.8"/>
<text x="745.4" y="322.1" font-size="5.76" fill="#159494" stroke="#159494" stroke-width="0.12" textLength="26.5" lengthAdjust="spacingAndGlyphs">MICRO_SD1</text>
<text transform="translate(785.2,393.1) rotate(-90)" x="0" y="0" font-size="5.76" fill="#159494" stroke="#159494" stroke-width="0.12" textLength="66.1" lengthAdjust="spacingAndGlyphs">MICRO_SD(TFC-WPAPR-08)</text>
<line x1="737.5" y1="332.3" x2="751.5" y2="332.3" stroke="#b04848" stroke-width="0.75"/>
<text x="743.5" y="331.6" font-size="4.85" fill="#a03030" stroke="#a03030" stroke-width="0.28" textLength="2.8" lengthAdjust="spacingAndGlyphs">2</text>
<text x="754.2" y="333.8" font-size="4.55" fill="#159494" stroke="#159494" stroke-width="0.12" textLength="21.5" lengthAdjust="spacingAndGlyphs">CS/DAT3/CS</text>
<line x1="737.5" y1="338.7" x2="751.5" y2="338.7" stroke="#b04848" stroke-width="0.75"/>
<text x="743.5" y="338" font-size="4.85" fill="#a03030" stroke="#a03030" stroke-width="0.28" textLength="2.8" lengthAdjust="spacingAndGlyphs">3</text>
<text x="754.2" y="340.2" font-size="4.55" fill="#159494" stroke="#159494" stroke-width="0.12" textLength="12.9" lengthAdjust="spacingAndGlyphs">CMD/DI</text>
<line x1="737.5" y1="345.1" x2="751.5" y2="345.1" stroke="#b04848" stroke-width="0.75"/>
<text x="743.5" y="344.4" font-size="4.85" fill="#a03030" stroke="#a03030" stroke-width="0.28" textLength="2.8" lengthAdjust="spacingAndGlyphs">4</text>
<text x="754.2" y="346.6" font-size="4.55" fill="#159494" stroke="#159494" stroke-width="0.12" textLength="6.45" lengthAdjust="spacingAndGlyphs">VDD</text>
<line x1="737.5" y1="351.5" x2="751.5" y2="351.5" stroke="#b04848" stroke-width="0.75"/>
<text x="743.5" y="350.8" font-size="4.85" fill="#a03030" stroke="#a03030" stroke-width="0.28" textLength="2.8" lengthAdjust="spacingAndGlyphs">5</text>
<text x="754.2" y="353" font-size="4.55" fill="#159494" stroke="#159494" stroke-width="0.12" textLength="6.45" lengthAdjust="spacingAndGlyphs">VSS</text>
<line x1="737.5" y1="357.9" x2="751.5" y2="357.9" stroke="#b04848" stroke-width="0.75"/>
<text x="743.5" y="357.2" font-size="4.85" fill="#a03030" stroke="#a03030" stroke-width="0.28" textLength="2.8" lengthAdjust="spacingAndGlyphs">6</text>
<text x="754.2" y="359.4" font-size="4.55" fill="#159494" stroke="#159494" stroke-width="0.12" textLength="17.2" lengthAdjust="spacingAndGlyphs">CLK/SCLK</text>
<line x1="737.5" y1="364.3" x2="751.5" y2="364.3" stroke="#b04848" stroke-width="0.75"/>
<text x="743.5" y="363.6" font-size="4.85" fill="#a03030" stroke="#a03030" stroke-width="0.28" textLength="2.8" lengthAdjust="spacingAndGlyphs">7</text>
<text x="754.2" y="365.8" font-size="4.55" fill="#159494" stroke="#159494" stroke-width="0.12" textLength="15.05" lengthAdjust="spacingAndGlyphs">DAT0/DO</text>
<line x1="737.5" y1="370.7" x2="751.5" y2="370.7" stroke="#b04848" stroke-width="0.75"/>
<text x="743.5" y="370" font-size="4.85" fill="#a03030" stroke="#a03030" stroke-width="0.28" textLength="2.8" lengthAdjust="spacingAndGlyphs">8</text>
<text x="754.2" y="372.2" font-size="4.55" fill="#159494" stroke="#159494" stroke-width="0.12" textLength="17.2" lengthAdjust="spacingAndGlyphs">DAT1/RES</text>
<line x1="737.5" y1="377.1" x2="751.5" y2="377.1" stroke="#b04848" stroke-width="0.75"/>
<text x="743.5" y="376.4" font-size="4.85" fill="#a03030" stroke="#a03030" stroke-width="0.28" textLength="2.8" lengthAdjust="spacingAndGlyphs">1</text>
<text x="754.2" y="378.6" font-size="4.55" fill="#159494" stroke="#159494" stroke-width="0.12" textLength="17.2" lengthAdjust="spacingAndGlyphs">DAT2/RES</text>
<line x1="737.5" y1="383.5" x2="751.5" y2="383.5" stroke="#b04848" stroke-width="0.75"/>
<text x="743.5" y="382.8" font-size="4.85" fill="#a03030" stroke="#a03030" stroke-width="0.28" textLength="2.8" lengthAdjust="spacingAndGlyphs">9</text>
<line x1="737.5" y1="389.9" x2="751.5" y2="389.9" stroke="#b04848" stroke-width="0.75"/>
<text x="743.5" y="389.2" font-size="4.85" fill="#a03030" stroke="#a03030" stroke-width="0.28" textLength="5.6" lengthAdjust="spacingAndGlyphs">10</text>
<path d="M751.5 383.75 H760 L763 381 M766 383.75 H771.5 V390 H751.5" fill="none" stroke="#a03030" stroke-width="0.7"/>
<line x1="713.5" y1="332.3" x2="737.5" y2="332.3" stroke="#48a848" stroke-width="0.75"/>
<text x="715.6" y="332" font-size="5.45" fill="#1a1a1a" stroke="#1a1a1a" stroke-width="0.12" textLength="24.4" lengthAdjust="spacingAndGlyphs">SPI0_CSn1</text>
<line x1="713.5" y1="338.7" x2="737.5" y2="338.7" stroke="#48a848" stroke-width="0.75"/>
<text x="715.6" y="338.3" font-size="5.45" fill="#1a1a1a" stroke="#1a1a1a" stroke-width="0.12" textLength="24.4" lengthAdjust="spacingAndGlyphs">SPI0_MOSI</text>
<line x1="715" y1="351.5" x2="737.5" y2="351.5" stroke="#48a848" stroke-width="0.75"/>
<path d="M715 348.9 L711 351.5 L715 354.1 Z" fill="none" stroke="#a03030" stroke-width="0.7"/>
<text x="715" y="350.4" font-size="4.55" fill="#9a9a9a" stroke="#9a9a9a" stroke-width="0.12" textLength="7.5" lengthAdjust="spacingAndGlyphs">GND</text>
<text x="717.5" y="355.3" font-size="3.64" fill="#9a9a9a" stroke="#9a9a9a" stroke-width="0.25" textLength="1.5" lengthAdjust="spacingAndGlyphs">1</text>
<text x="701" y="353.8" font-size="5.76" fill="#159494" stroke="#159494" stroke-width="0.12" textLength="10.5" lengthAdjust="spacingAndGlyphs">GND</text>
<line x1="703" y1="357.9" x2="737.5" y2="357.9" stroke="#48a848" stroke-width="0.75"/>
<text x="717" y="357.8" font-size="5.45" fill="#1a1a1a" stroke="#1a1a1a" stroke-width="0.12" textLength="22.2" lengthAdjust="spacingAndGlyphs">SPI0_CLK</text>
<line x1="703" y1="364.3" x2="737.5" y2="364.3" stroke="#48a848" stroke-width="0.75"/>
<text x="710.8" y="364.1" font-size="5.45" fill="#1a1a1a" stroke="#1a1a1a" stroke-width="0.12" textLength="25" lengthAdjust="spacingAndGlyphs">SPI0_MISO</text>
<path d="M736.9 369.1 L740.1 372.3 M740.1 369.1 L736.9 372.3" stroke="#2020b0" stroke-width="0.7"/>
<path d="M736.9 375.5 L740.1 378.7 M740.1 375.5 L736.9 378.7" stroke="#2020b0" stroke-width="0.7"/>
<path d="M736.9 381.9 L740.1 385.1 M740.1 381.9 L736.9 385.1" stroke="#2020b0" stroke-width="0.7"/>
<polyline fill="none" points="737.5,390 735.4,390 735.4,397" stroke="#48a848" stroke-width="0.75"/>
<path d="M732.8 397.5 L735.4 401.5 L738 397.5 Z" fill="none" stroke="#a03030" stroke-width="0.7"/>
<text x="730.8" y="407.5" font-size="5.76" fill="#159494" stroke="#159494" stroke-width="0.12" textLength="9.2" lengthAdjust="spacingAndGlyphs">GND</text>
<text transform="translate(732.6,397) rotate(-90)" x="0" y="0" font-size="3.33" fill="#9a9a9a" stroke="#9a9a9a" stroke-width="0.25" textLength="8" lengthAdjust="spacingAndGlyphs">GND</text>
<text x="904.9" y="277" font-size="5.76" fill="#159494" stroke="#159494" stroke-width="0.12" textLength="14.7" lengthAdjust="spacingAndGlyphs">HDMI1</text>
<polyline fill="none" points="897,281 918,281 918,288" stroke="#48a848" stroke-width="0.75"/>
<circle cx="911.2" cy="281" r="1.2" fill="#0a8a0a"/>
<line x1="911.2" y1="281" x2="911.2" y2="288" stroke="#48a848" stroke-width="0.75"/>
<path d="M895.5 278.4 L891.5 281 L895.5 283.6 Z" fill="none" stroke="#a03030" stroke-width="0.7"/>
<text x="895.5" y="279.9" font-size="4.55" fill="#9a9a9a" stroke="#9a9a9a" stroke-width="0.12" textLength="7.5" lengthAdjust="spacingAndGlyphs">GND</text>
<text x="898" y="284.8" font-size="3.64" fill="#9a9a9a" stroke="#9a9a9a" stroke-width="0.25" textLength="1.5" lengthAdjust="spacingAndGlyphs">1</text>
<text x="880.8" y="282.9" font-size="5.76" fill="#159494" stroke="#159494" stroke-width="0.12" textLength="9.9" lengthAdjust="spacingAndGlyphs">GND</text>
<line x1="911.2" y1="288" x2="911.2" y2="293.5" stroke="#b04848" stroke-width="0.75"/>
<line x1="918" y1="288" x2="918" y2="293.5" stroke="#b04848" stroke-width="0.75"/>
<path d="M917.5 293.5 V428.3 M904.7 305 Q905 297 911 293.5 H917.5 M904.7 305 V416.4 Q905 421.8 910 421.8 H917.5" fill="none" stroke="#a03030" stroke-width="0.8"/>
<line x1="910" y1="428.3" x2="910" y2="434.6" stroke="#b04848" stroke-width="0.75"/>
<line x1="916.3" y1="428.3" x2="916.3" y2="434.6" stroke="#b04848" stroke-width="0.75"/>
<line x1="896" y1="434.6" x2="917" y2="434.6" stroke="#48a848" stroke-width="0.75"/>
<circle cx="910" cy="434.6" r="1.2" fill="#0a8a0a"/>
<path d="M896 432 L892 434.6 L896 437.2 Z" fill="none" stroke="#a03030" stroke-width="0.7"/>
<text x="896" y="433.5" font-size="4.55" fill="#9a9a9a" stroke="#9a9a9a" stroke-width="0.12" textLength="7.5" lengthAdjust="spacingAndGlyphs">GND</text>
<text x="898.5" y="438.4" font-size="3.64" fill="#9a9a9a" stroke="#9a9a9a" stroke-width="0.25" textLength="1.5" lengthAdjust="spacingAndGlyphs">1</text>
<text x="880.8" y="436.5" font-size="5.76" fill="#159494" stroke="#159494" stroke-width="0.12" textLength="9.5" lengthAdjust="spacingAndGlyphs">GND</text>
<text x="892.8" y="446.6" font-size="5.76" fill="#159494" stroke="#159494" stroke-width="0.12" textLength="35.2" lengthAdjust="spacingAndGlyphs">HDMI-SWM-19</text>
<rect x="912.6" y="298" width="2.4" height="5" fill="none" stroke="#a03030" stroke-width="0.7"/>
<line x1="897" y1="300.5" x2="912.6" y2="300.5" stroke="#b04848" stroke-width="0.75"/>
<text x="900.5" y="299.9" font-size="5.45" fill="#a03030" stroke="#a03030" stroke-width="0.28" textLength="3" lengthAdjust="spacingAndGlyphs">1</text>
<rect x="907.7" y="304.39" width="2.4" height="5" fill="none" stroke="#a03030" stroke-width="0.7"/>
<line x1="897" y1="306.89" x2="907.7" y2="306.89" stroke="#b04848" stroke-width="0.75"/>
<text x="900.5" y="306.29" font-size="5.45" fill="#a03030" stroke="#a03030" stroke-width="0.28" textLength="3" lengthAdjust="spacingAndGlyphs">2</text>
<rect x="912.6" y="310.78" width="2.4" height="5" fill="none" stroke="#a03030" stroke-width="0.7"/>
<line x1="897" y1="313.28" x2="912.6" y2="313.28" stroke="#b04848" stroke-width="0.75"/>
<text x="900.5" y="312.68" font-size="5.45" fill="#a03030" stroke="#a03030" stroke-width="0.28" textLength="3" lengthAdjust="spacingAndGlyphs">3</text>
<rect x="907.7" y="317.17" width="2.4" height="5" fill="none" stroke="#a03030" stroke-width="0.7"/>
<line x1="897" y1="319.67" x2="907.7" y2="319.67" stroke="#b04848" stroke-width="0.75"/>
<text x="900.5" y="319.07" font-size="5.45" fill="#a03030" stroke="#a03030" stroke-width="0.28" textLength="3" lengthAdjust="spacingAndGlyphs">4</text>
<rect x="912.6" y="323.56" width="2.4" height="5" fill="none" stroke="#a03030" stroke-width="0.7"/>
<line x1="897" y1="326.06" x2="912.6" y2="326.06" stroke="#b04848" stroke-width="0.75"/>
<text x="900.5" y="325.46" font-size="5.45" fill="#a03030" stroke="#a03030" stroke-width="0.28" textLength="3" lengthAdjust="spacingAndGlyphs">5</text>
<rect x="907.7" y="329.95" width="2.4" height="5" fill="none" stroke="#a03030" stroke-width="0.7"/>
<line x1="897" y1="332.45" x2="907.7" y2="332.45" stroke="#b04848" stroke-width="0.75"/>
<text x="900.5" y="331.85" font-size="5.45" fill="#a03030" stroke="#a03030" stroke-width="0.28" textLength="3" lengthAdjust="spacingAndGlyphs">6</text>
<rect x="912.6" y="336.34" width="2.4" height="5" fill="none" stroke="#a03030" stroke-width="0.7"/>
<line x1="897" y1="338.84" x2="912.6" y2="338.84" stroke="#b04848" stroke-width="0.75"/>
<text x="900.5" y="338.24" font-size="5.45" fill="#a03030" stroke="#a03030" stroke-width="0.28" textLength="3" lengthAdjust="spacingAndGlyphs">7</text>
<rect x="907.7" y="342.73" width="2.4" height="5" fill="none" stroke="#a03030" stroke-width="0.7"/>
<line x1="897" y1="345.23" x2="907.7" y2="345.23" stroke="#b04848" stroke-width="0.75"/>
<text x="900.5" y="344.63" font-size="5.45" fill="#a03030" stroke="#a03030" stroke-width="0.28" textLength="3" lengthAdjust="spacingAndGlyphs">8</text>
<rect x="912.6" y="349.12" width="2.4" height="5" fill="none" stroke="#a03030" stroke-width="0.7"/>
<line x1="897" y1="351.62" x2="912.6" y2="351.62" stroke="#b04848" stroke-width="0.75"/>
<text x="900.5" y="351.02" font-size="5.45" fill="#a03030" stroke="#a03030" stroke-width="0.28" textLength="3" lengthAdjust="spacingAndGlyphs">9</text>
<rect x="907.7" y="355.51" width="2.4" height="5" fill="none" stroke="#a03030" stroke-width="0.7"/>
<line x1="897" y1="358.01" x2="907.7" y2="358.01" stroke="#b04848" stroke-width="0.75"/>
<text x="900.5" y="357.41" font-size="5.45" fill="#a03030" stroke="#a03030" stroke-width="0.28" textLength="6" lengthAdjust="spacingAndGlyphs">10</text>
<rect x="912.6" y="361.9" width="2.4" height="5" fill="none" stroke="#a03030" stroke-width="0.7"/>
<line x1="897" y1="364.4" x2="912.6" y2="364.4" stroke="#b04848" stroke-width="0.75"/>
<text x="900.5" y="363.8" font-size="5.45" fill="#a03030" stroke="#a03030" stroke-width="0.28" textLength="6" lengthAdjust="spacingAndGlyphs">11</text>
<rect x="907.7" y="368.29" width="2.4" height="5" fill="none" stroke="#a03030" stroke-width="0.7"/>
<line x1="897" y1="370.79" x2="907.7" y2="370.79" stroke="#b04848" stroke-width="0.75"/>
<text x="900.5" y="370.19" font-size="5.45" fill="#a03030" stroke="#a03030" stroke-width="0.28" textLength="6" lengthAdjust="spacingAndGlyphs">12</text>
<rect x="912.6" y="374.68" width="2.4" height="5" fill="none" stroke="#a03030" stroke-width="0.7"/>
<line x1="897" y1="377.18" x2="912.6" y2="377.18" stroke="#b04848" stroke-width="0.75"/>
<text x="900.5" y="376.58" font-size="5.45" fill="#a03030" stroke="#a03030" stroke-width="0.28" textLength="6" lengthAdjust="spacingAndGlyphs">13</text>
<rect x="907.7" y="381.07" width="2.4" height="5" fill="none" stroke="#a03030" stroke-width="0.7"/>
<line x1="897" y1="383.57" x2="907.7" y2="383.57" stroke="#b04848" stroke-width="0.75"/>
<text x="900.5" y="382.97" font-size="5.45" fill="#a03030" stroke="#a03030" stroke-width="0.28" textLength="6" lengthAdjust="spacingAndGlyphs">14</text>
<rect x="912.6" y="387.46" width="2.4" height="5" fill="none" stroke="#a03030" stroke-width="0.7"/>
<line x1="897" y1="389.96" x2="912.6" y2="389.96" stroke="#b04848" stroke-width="0.75"/>
<text x="900.5" y="389.36" font-size="5.45" fill="#a03030" stroke="#a03030" stroke-width="0.28" textLength="6" lengthAdjust="spacingAndGlyphs">15</text>
<rect x="907.7" y="393.85" width="2.4" height="5" fill="none" stroke="#a03030" stroke-width="0.7"/>
<line x1="897" y1="396.35" x2="907.7" y2="396.35" stroke="#b04848" stroke-width="0.75"/>
<text x="900.5" y="395.75" font-size="5.45" fill="#a03030" stroke="#a03030" stroke-width="0.28" textLength="6" lengthAdjust="spacingAndGlyphs">16</text>
<rect x="912.6" y="400.24" width="2.4" height="5" fill="none" stroke="#a03030" stroke-width="0.7"/>
<line x1="897" y1="402.74" x2="912.6" y2="402.74" stroke="#b04848" stroke-width="0.75"/>
<text x="900.5" y="402.14" font-size="5.45" fill="#a03030" stroke="#a03030" stroke-width="0.28" textLength="6" lengthAdjust="spacingAndGlyphs">17</text>
<rect x="907.7" y="406.63" width="2.4" height="5" fill="none" stroke="#a03030" stroke-width="0.7"/>
<line x1="897" y1="409.13" x2="907.7" y2="409.13" stroke="#b04848" stroke-width="0.75"/>
<text x="900.5" y="408.53" font-size="5.45" fill="#a03030" stroke="#a03030" stroke-width="0.28" textLength="6" lengthAdjust="spacingAndGlyphs">18</text>
<rect x="912.6" y="413.02" width="2.4" height="5" fill="none" stroke="#a03030" stroke-width="0.7"/>
<line x1="897" y1="415.52" x2="912.6" y2="415.52" stroke="#b04848" stroke-width="0.75"/>
<text x="900.5" y="414.92" font-size="5.45" fill="#a03030" stroke="#a03030" stroke-width="0.28" textLength="6" lengthAdjust="spacingAndGlyphs">19</text>
<text x="822" y="300" font-size="5.76" fill="#1a1a1a" stroke="#1a1a1a" stroke-width="0.12" textLength="22.9" lengthAdjust="spacingAndGlyphs">PICO_D2+</text>
<text x="885.9" y="300" font-size="5.76" fill="#1a1a1a" stroke="#1a1a1a" stroke-width="0.12" textLength="9.8" lengthAdjust="spacingAndGlyphs">D2+</text>
<line x1="822" y1="300.5" x2="866.1" y2="300.5" stroke="#48a848" stroke-width="0.75"/>
<rect x="866.1" y="298" width="13.5" height="5" fill="none" stroke="#a03030" stroke-width="0.8"/>
<line x1="879.6" y1="300.5" x2="897" y2="300.5" stroke="#48a848" stroke-width="0.75"/>
<text x="855.9" y="305.9" font-size="5.76" fill="#159494" stroke="#159494" stroke-width="0.12" textLength="8.5" lengthAdjust="spacingAndGlyphs">R11</text>
<text x="880.8" y="305.1" font-size="3.33" fill="#159494" stroke="#159494" stroke-width="0.25" textLength="16.8" lengthAdjust="spacingAndGlyphs">270R/0402</text>
<text x="822" y="312.78" font-size="5.76" fill="#1a1a1a" stroke="#1a1a1a" stroke-width="0.12" textLength="22.9" lengthAdjust="spacingAndGlyphs">PICO_D2-</text>
<text x="885.9" y="312.78" font-size="5.76" fill="#1a1a1a" stroke="#1a1a1a" stroke-width="0.12" textLength="9.8" lengthAdjust="spacingAndGlyphs">D2-</text>
<line x1="822" y1="313.28" x2="853.25" y2="313.28" stroke="#48a848" stroke-width="0.75"/>
<rect x="853.25" y="310.78" width="13.15" height="5" fill="none" stroke="#a03030" stroke-width="0.8"/>
<line x1="866.4" y1="313.28" x2="897" y2="313.28" stroke="#48a848" stroke-width="0.75"/>
<text x="847.8" y="311.78" font-size="5.76" fill="#159494" stroke="#159494" stroke-width="0.12" textLength="5.6" lengthAdjust="spacingAndGlyphs">R7</text>
<text x="867.6" y="310.98" font-size="3.33" fill="#159494" stroke="#159494" stroke-width="0.25" textLength="16.8" lengthAdjust="spacingAndGlyphs">270R/0402</text>
<text x="822" y="319.17" font-size="5.76" fill="#1a1a1a" stroke="#1a1a1a" stroke-width="0.12" textLength="22.9" lengthAdjust="spacingAndGlyphs">PICO_D1+</text>
<text x="885.9" y="319.17" font-size="5.76" fill="#1a1a1a" stroke="#1a1a1a" stroke-width="0.12" textLength="9.8" lengthAdjust="spacingAndGlyphs">D1+</text>
<line x1="822" y1="319.67" x2="866.1" y2="319.67" stroke="#48a848" stroke-width="0.75"/>
<rect x="866.1" y="317.17" width="13.5" height="5" fill="none" stroke="#a03030" stroke-width="0.8"/>
<line x1="879.6" y1="319.67" x2="897" y2="319.67" stroke="#48a848" stroke-width="0.75"/>
<text x="855.9" y="325.07" font-size="5.76" fill="#159494" stroke="#159494" stroke-width="0.12" textLength="8.5" lengthAdjust="spacingAndGlyphs">R12</text>
<text x="880.8" y="324.27" font-size="3.33" fill="#159494" stroke="#159494" stroke-width="0.25" textLength="16.8" lengthAdjust="spacingAndGlyphs">270R/0402</text>
<text x="822" y="331.95" font-size="5.76" fill="#1a1a1a" stroke="#1a1a1a" stroke-width="0.12" textLength="22.9" lengthAdjust="spacingAndGlyphs">PICO_D1-</text>
<text x="885.9" y="331.95" font-size="5.76" fill="#1a1a1a" stroke="#1a1a1a" stroke-width="0.12" textLength="9.8" lengthAdjust="spacingAndGlyphs">D1-</text>
<line x1="822" y1="332.45" x2="853.25" y2="332.45" stroke="#48a848" stroke-width="0.75"/>
<rect x="853.25" y="329.95" width="13.15" height="5" fill="none" stroke="#a03030" stroke-width="0.8"/>
<line x1="866.4" y1="332.45" x2="897" y2="332.45" stroke="#48a848" stroke-width="0.75"/>
<text x="847.8" y="330.95" font-size="5.76" fill="#159494" stroke="#159494" stroke-width="0.12" textLength="5.6" lengthAdjust="spacingAndGlyphs">R8</text>
<text x="867.6" y="330.15" font-size="3.33" fill="#159494" stroke="#159494" stroke-width="0.25" textLength="16.8" lengthAdjust="spacingAndGlyphs">270R/0402</text>
<text x="822" y="338.34" font-size="5.76" fill="#1a1a1a" stroke="#1a1a1a" stroke-width="0.12" textLength="22.9" lengthAdjust="spacingAndGlyphs">PICO_D0+</text>
<text x="885.9" y="338.34" font-size="5.76" fill="#1a1a1a" stroke="#1a1a1a" stroke-width="0.12" textLength="9.8" lengthAdjust="spacingAndGlyphs">D0+</text>
<line x1="822" y1="338.84" x2="866.1" y2="338.84" stroke="#48a848" stroke-width="0.75"/>
<rect x="866.1" y="336.34" width="13.5" height="5" fill="none" stroke="#a03030" stroke-width="0.8"/>
<line x1="879.6" y1="338.84" x2="897" y2="338.84" stroke="#48a848" stroke-width="0.75"/>
<text x="855.9" y="344.24" font-size="5.76" fill="#159494" stroke="#159494" stroke-width="0.12" textLength="8.5" lengthAdjust="spacingAndGlyphs">R13</text>
<text x="880.8" y="343.44" font-size="3.33" fill="#159494" stroke="#159494" stroke-width="0.25" textLength="16.8" lengthAdjust="spacingAndGlyphs">270R/0402</text>
<text x="822" y="351.12" font-size="5.76" fill="#1a1a1a" stroke="#1a1a1a" stroke-width="0.12" textLength="22.9" lengthAdjust="spacingAndGlyphs">PICO_D0-</text>
<text x="885.9" y="351.12" font-size="5.76" fill="#1a1a1a" stroke="#1a1a1a" stroke-width="0.12" textLength="9.8" lengthAdjust="spacingAndGlyphs">D0-</text>
<line x1="822" y1="351.62" x2="853.25" y2="351.62" stroke="#48a848" stroke-width="0.75"/>
<rect x="853.25" y="349.12" width="13.15" height="5" fill="none" stroke="#a03030" stroke-width="0.8"/>
<line x1="866.4" y1="351.62" x2="897" y2="351.62" stroke="#48a848" stroke-width="0.75"/>
<text x="847.8" y="350.12" font-size="5.76" fill="#159494" stroke="#159494" stroke-width="0.12" textLength="5.6" lengthAdjust="spacingAndGlyphs">R9</text>
<text x="867.6" y="349.32" font-size="3.33" fill="#159494" stroke="#159494" stroke-width="0.25" textLength="16.8" lengthAdjust="spacingAndGlyphs">270R/0402</text>
<text x="822" y="357.51" font-size="5.76" fill="#1a1a1a" stroke="#1a1a1a" stroke-width="0.12" textLength="22.9" lengthAdjust="spacingAndGlyphs">PICO_CK+</text>
<text x="885.9" y="357.51" font-size="5.76" fill="#1a1a1a" stroke="#1a1a1a" stroke-width="0.12" textLength="9.8" lengthAdjust="spacingAndGlyphs">CK+</text>
<line x1="822" y1="358.01" x2="866.1" y2="358.01" stroke="#48a848" stroke-width="0.75"/>
<rect x="866.1" y="355.51" width="13.5" height="5" fill="none" stroke="#a03030" stroke-width="0.8"/>
<line x1="879.6" y1="358.01" x2="897" y2="358.01" stroke="#48a848" stroke-width="0.75"/>
<text x="855.9" y="363.41" font-size="5.76" fill="#159494" stroke="#159494" stroke-width="0.12" textLength="8.5" lengthAdjust="spacingAndGlyphs">R14</text>
<text x="880.8" y="362.61" font-size="3.33" fill="#159494" stroke="#159494" stroke-width="0.25" textLength="16.8" lengthAdjust="spacingAndGlyphs">270R/0402</text>
<text x="822" y="370.29" font-size="5.76" fill="#1a1a1a" stroke="#1a1a1a" stroke-width="0.12" textLength="22.9" lengthAdjust="spacingAndGlyphs">PICO_CK-</text>
<text x="885.9" y="370.29" font-size="5.76" fill="#1a1a1a" stroke="#1a1a1a" stroke-width="0.12" textLength="9.8" lengthAdjust="spacingAndGlyphs">CK-</text>
<line x1="822" y1="370.79" x2="853.25" y2="370.79" stroke="#48a848" stroke-width="0.75"/>
<rect x="853.25" y="368.29" width="13.15" height="5" fill="none" stroke="#a03030" stroke-width="0.8"/>
<line x1="866.4" y1="370.79" x2="897" y2="370.79" stroke="#48a848" stroke-width="0.75"/>
<text x="847.8" y="369.29" font-size="5.76" fill="#159494" stroke="#159494" stroke-width="0.12" textLength="8.4" lengthAdjust="spacingAndGlyphs">R10</text>
<text x="867.6" y="368.49" font-size="3.33" fill="#159494" stroke="#159494" stroke-width="0.25" textLength="16.8" lengthAdjust="spacingAndGlyphs">270R/0402</text>
<line x1="820" y1="306.89" x2="897" y2="306.89" stroke="#48a848" stroke-width="0.75"/>
<path d="M820 304.29 L816 306.89 L820 309.49 Z" fill="none" stroke="#a03030" stroke-width="0.7"/>
<text x="820" y="305.79" font-size="4.55" fill="#9a9a9a" stroke="#9a9a9a" stroke-width="0.12" textLength="7.5" lengthAdjust="spacingAndGlyphs">GND</text>
<text x="822.5" y="310.69" font-size="3.64" fill="#9a9a9a" stroke="#9a9a9a" stroke-width="0.25" textLength="1.5" lengthAdjust="spacingAndGlyphs">1</text>
<text x="803.9" y="308.79" font-size="5.76" fill="#159494" stroke="#159494" stroke-width="0.12" textLength="10.3" lengthAdjust="spacingAndGlyphs">GND</text>
<line x1="820" y1="326.06" x2="897" y2="326.06" stroke="#48a848" stroke-width="0.75"/>
<path d="M820 323.46 L816 326.06 L820 328.66 Z" fill="none" stroke="#a03030" stroke-width="0.7"/>
<text x="820" y="324.96" font-size="4.55" fill="#9a9a9a" stroke="#9a9a9a" stroke-width="0.12" textLength="7.5" lengthAdjust="spacingAndGlyphs">GND</text>
<text x="822.5" y="329.86" font-size="3.64" fill="#9a9a9a" stroke="#9a9a9a" stroke-width="0.25" textLength="1.5" lengthAdjust="spacingAndGlyphs">1</text>
<text x="803.9" y="327.96" font-size="5.76" fill="#159494" stroke="#159494" stroke-width="0.12" textLength="10.3" lengthAdjust="spacingAndGlyphs">GND</text>
<line x1="820" y1="345.23" x2="897" y2="345.23" stroke="#48a848" stroke-width="0.75"/>
<path d="M820 342.63 L816 345.23 L820 347.83 Z" fill="none" stroke="#a03030" stroke-width="0.7"/>
<text x="820" y="344.13" font-size="4.55" fill="#9a9a9a" stroke="#9a9a9a" stroke-width="0.12" textLength="7.5" lengthAdjust="spacingAndGlyphs">GND</text>
<text x="822.5" y="349.03" font-size="3.64" fill="#9a9a9a" stroke="#9a9a9a" stroke-width="0.25" textLength="1.5" lengthAdjust="spacingAndGlyphs">1</text>
<text x="803.9" y="347.13" font-size="5.76" fill="#159494" stroke="#159494" stroke-width="0.12" textLength="10.3" lengthAdjust="spacingAndGlyphs">GND</text>
<line x1="820" y1="364.4" x2="897" y2="364.4" stroke="#48a848" stroke-width="0.75"/>
<path d="M820 361.8 L816 364.4 L820 367 Z" fill="none" stroke="#a03030" stroke-width="0.7"/>
<text x="820" y="363.3" font-size="4.55" fill="#9a9a9a" stroke="#9a9a9a" stroke-width="0.12" textLength="7.5" lengthAdjust="spacingAndGlyphs">GND</text>
<text x="822.5" y="368.2" font-size="3.64" fill="#9a9a9a" stroke="#9a9a9a" stroke-width="0.25" textLength="1.5" lengthAdjust="spacingAndGlyphs">1</text>
<text x="803.9" y="366.3" font-size="5.76" fill="#159494" stroke="#159494" stroke-width="0.12" textLength="10.3" lengthAdjust="spacingAndGlyphs">GND</text>
<path d="M808 374.5 L804.5 376.7 L808 378.9 M804.5 376.7 H810.5" fill="none" stroke="#a03030" stroke-width="0.7"/>
<line x1="806" y1="376.7" x2="824.8" y2="376.7" stroke="#48a848" stroke-width="0.75"/>
<rect x="824.8" y="374.2" width="13" height="5" fill="none" stroke="#a03030" stroke-width="0.8"/>
<line x1="837.8" y1="376.7" x2="866.5" y2="376.7" stroke="#48a848" stroke-width="0.75"/>
<rect x="866.5" y="374.2" width="13.5" height="5" fill="none" stroke="#a03030" stroke-width="0.8"/>
<line x1="880" y1="376.7" x2="897" y2="376.7" stroke="#48a848" stroke-width="0.75"/>
<text x="798" y="368.65" font-size="5.76" fill="#159494" stroke="#159494" stroke-width="0.12" textLength="13.4" lengthAdjust="spacingAndGlyphs">+3.3V</text>
<text transform="translate(804.1,386) rotate(-90)" x="0" y="0" font-size="3.33" fill="#9a9a9a" stroke="#9a9a9a" stroke-width="0.25" textLength="8" lengthAdjust="spacingAndGlyphs">+3V3</text>
<text x="842.5" y="376.9" font-size="5.76" fill="#1a1a1a" stroke="#1a1a1a" stroke-width="0.12" textLength="18.5" lengthAdjust="spacingAndGlyphs">DVI_CEC</text>
<text x="810.6" y="382.4" font-size="5.76" fill="#159494" stroke="#159494" stroke-width="0.12" textLength="6.15" lengthAdjust="spacingAndGlyphs">R6</text>
<text x="856.5" y="382.4" font-size="5.76" fill="#159494" stroke="#159494" stroke-width="0.12" textLength="8.5" lengthAdjust="spacingAndGlyphs">R25</text>
<text x="810" y="375.9" font-size="3.33" fill="#159494" stroke="#159494" stroke-width="0.25" textLength="14" lengthAdjust="spacingAndGlyphs">3.3k/0402</text>
<text x="880.8" y="375.9" font-size="3.33" fill="#159494" stroke="#159494" stroke-width="0.25" textLength="16.8" lengthAdjust="spacingAndGlyphs">270R/0402</text>
<path d="M896.9 381.97 L900.1 385.17 M900.1 381.97 L896.9 385.17" stroke="#2020b0" stroke-width="0.7"/>
<path d="M896.9 413.92 L900.1 417.12 M900.1 413.92 L896.9 417.12" stroke="#2020b0" stroke-width="0.7"/>
<line x1="814.8" y1="390" x2="840.6" y2="390" stroke="#48a848" stroke-width="0.75"/>
<rect x="840.6" y="387.5" width="13.4" height="5" fill="none" stroke="#a03030" stroke-width="0.8"/>
<line x1="854" y1="390" x2="897" y2="390" stroke="#48a848" stroke-width="0.75"/>
<line x1="814.8" y1="396.3" x2="840.6" y2="396.3" stroke="#48a848" stroke-width="0.75"/>
<rect x="840.6" y="393.8" width="13.4" height="5" fill="none" stroke="#a03030" stroke-width="0.8"/>
<line x1="854" y1="396.3" x2="897" y2="396.3" stroke="#48a848" stroke-width="0.75"/>
<line x1="814.8" y1="390" x2="814.8" y2="409.2" stroke="#48a848" stroke-width="0.75"/>
<circle cx="814.8" cy="396.3" r="1.2" fill="#0a8a0a"/>
<circle cx="814.8" cy="409.2" r="1.2" fill="#0a8a0a"/>
<text x="818.3" y="388.3" font-size="5.76" fill="#159494" stroke="#159494" stroke-width="0.12" textLength="6.1" lengthAdjust="spacingAndGlyphs">R2</text>
<text x="818.3" y="394.4" font-size="5.76" fill="#159494" stroke="#159494" stroke-width="0.12" textLength="6.1" lengthAdjust="spacingAndGlyphs">R3</text>
<text x="826.3" y="387.5" font-size="3.33" fill="#159494" stroke="#159494" stroke-width="0.25" textLength="13.4" lengthAdjust="spacingAndGlyphs">3.3k/0402</text>
<text x="826.3" y="393.6" font-size="3.33" fill="#159494" stroke="#159494" stroke-width="0.25" textLength="13.4" lengthAdjust="spacingAndGlyphs">3.3k/0402</text>
<text x="861.7" y="389.7" font-size="5.76" fill="#1a1a1a" stroke="#1a1a1a" stroke-width="0.12" textLength="30" lengthAdjust="spacingAndGlyphs">I2C1A_SCL_5</text>
<text x="861.7" y="395.8" font-size="5.76" fill="#1a1a1a" stroke="#1a1a1a" stroke-width="0.12" textLength="30" lengthAdjust="spacingAndGlyphs">I2C1A_SDA_5</text>
<line x1="890" y1="402.6" x2="897" y2="402.6" stroke="#48a848" stroke-width="0.75"/>
<path d="M890 400 L886 402.6 L890 405.2 Z" fill="none" stroke="#a03030" stroke-width="0.7"/>
<text x="890" y="401.5" font-size="4.55" fill="#9a9a9a" stroke="#9a9a9a" stroke-width="0.12" textLength="7.5" lengthAdjust="spacingAndGlyphs">GND</text>
<text x="892.5" y="406.4" font-size="3.64" fill="#9a9a9a" stroke="#9a9a9a" stroke-width="0.25" textLength="1.5" lengthAdjust="spacingAndGlyphs">1</text>
<text x="875" y="404.5" font-size="5.76" fill="#159494" stroke="#159494" stroke-width="0.12" textLength="9" lengthAdjust="spacingAndGlyphs">GND</text>
<path d="M807.8 407 L804.3 409.2 L807.8 411.4 M804.3 409.2 H810.3" fill="none" stroke="#a03030" stroke-width="0.7"/>
<line x1="806" y1="409.2" x2="831.5" y2="409.2" stroke="#48a848" stroke-width="0.75"/>
<path d="M834.5 406.5 A2.8 2.8 0 0 0 834.5 412 Z M838.5 406.5 A2.8 2.8 0 0 1 838.5 412 Z" fill="#a03030" stroke="#a03030" stroke-width="0.6"/>
<line x1="842" y1="409.2" x2="850.2" y2="409.2" stroke="#48a848" stroke-width="0.75"/>
<rect x="850.2" y="406.9" width="20.1" height="4.6" fill="none" stroke="#a03030" stroke-width="0.8"/>
<line x1="870.3" y1="409.2" x2="897" y2="409.2" stroke="#48a848" stroke-width="0.75"/>
<path d="M850.2 409.2 H870.3" stroke="#a03030" stroke-width="0.6"/>
<text x="792.3" y="411.65" font-size="5.76" fill="#159494" stroke="#159494" stroke-width="0.12" textLength="9.5" lengthAdjust="spacingAndGlyphs">+5V</text>
<text x="833.6" y="419.3" font-size="5.76" fill="#159494" stroke="#159494" stroke-width="0.12" textLength="7.6" lengthAdjust="spacingAndGlyphs">SJ1</text>
<text x="832" y="424" font-size="5.45" fill="#159494" stroke="#159494" stroke-width="0.12" textLength="11.1" lengthAdjust="spacingAndGlyphs">open</text>
<text x="853" y="404.9" font-size="5.76" fill="#159494" stroke="#159494" stroke-width="0.12" textLength="14.4" lengthAdjust="spacingAndGlyphs">FUSE1</text>
<text x="854" y="417.1" font-size="3.33" fill="#159494" stroke="#159494" stroke-width="0.25" textLength="12" lengthAdjust="spacingAndGlyphs">F0603</text>
<rect x="820.6" y="442" width="10.6" height="25.5" fill="none" stroke="#a03030" stroke-width="0.8"/>
<rect x="822.5" y="444.1" width="6.5" height="1.8" fill="#a03030"/>
<line x1="831.2" y1="445" x2="838" y2="445" stroke="#b04848" stroke-width="0.75"/>
<text x="833.5" y="444.4" font-size="5.15" fill="#a03030" stroke="#a03030" stroke-width="0.28" textLength="2.5" lengthAdjust="spacingAndGlyphs">1</text>
<rect x="822.5" y="450.4" width="6.5" height="1.8" fill="#a03030"/>
<line x1="831.2" y1="451.3" x2="838" y2="451.3" stroke="#b04848" stroke-width="0.75"/>
<text x="833.5" y="450.7" font-size="5.15" fill="#a03030" stroke="#a03030" stroke-width="0.28" textLength="2.5" lengthAdjust="spacingAndGlyphs">2</text>
<rect x="822.5" y="456.7" width="6.5" height="1.8" fill="#a03030"/>
<line x1="831.2" y1="457.6" x2="838" y2="457.6" stroke="#b04848" stroke-width="0.75"/>
<text x="833.5" y="457" font-size="5.15" fill="#a03030" stroke="#a03030" stroke-width="0.28" textLength="2.5" lengthAdjust="spacingAndGlyphs">3</text>
<rect x="822.5" y="463.3" width="6.5" height="1.8" fill="#a03030"/>
<line x1="831.2" y1="464.2" x2="838" y2="464.2" stroke="#b04848" stroke-width="0.75"/>
<text x="833.5" y="463.6" font-size="5.15" fill="#a03030" stroke="#a03030" stroke-width="0.28" textLength="2.5" lengthAdjust="spacingAndGlyphs">4</text>
<text x="815.8" y="440.9" font-size="5.76" fill="#159494" stroke="#159494" stroke-width="0.12" textLength="15.3" lengthAdjust="spacingAndGlyphs">CON2</text>
<text x="801.9" y="473.15" font-size="5.76" fill="#159494" stroke="#159494" stroke-width="0.12" textLength="38.1" lengthAdjust="spacingAndGlyphs">CI01D4P1VKD</text>
<line x1="838" y1="445" x2="879" y2="445" stroke="#48a848" stroke-width="0.75"/>
<text x="841.6" y="445.1" font-size="5.76" fill="#1a1a1a" stroke="#1a1a1a" stroke-width="0.12" textLength="21.8" lengthAdjust="spacingAndGlyphs">I2C1_SCL</text>
<line x1="838" y1="451.3" x2="879" y2="451.3" stroke="#48a848" stroke-width="0.75"/>
<text x="841.6" y="451.4" font-size="5.76" fill="#1a1a1a" stroke="#1a1a1a" stroke-width="0.12" textLength="21.8" lengthAdjust="spacingAndGlyphs">I2C1_SDA</text>
<polyline fill="none" points="838,457.6 862,457.6 862,468" stroke="#48a848" stroke-width="0.75"/>
<path d="M859.8 470.5 L862 474 L864.2 470.5 M862 474 V468" fill="none" stroke="#a03030" stroke-width="0.7"/>
<polyline fill="none" points="838,464.2 848.75,464.2 848.75,470" stroke="#48a848" stroke-width="0.75"/>
<path d="M846.15 470.5 L848.75 474.5 L851.35 470.5 Z" fill="none" stroke="#a03030" stroke-width="0.7"/>
<text x="843" y="482.5" font-size="5.76" fill="#159494" stroke="#159494" stroke-width="0.12" textLength="10" lengthAdjust="spacingAndGlyphs">GND</text>
<text x="856" y="482.5" font-size="5.76" fill="#159494" stroke="#159494" stroke-width="0.12" textLength="14.6" lengthAdjust="spacingAndGlyphs">+3.3V</text>
<text transform="translate(866.1,472) rotate(-90)" x="0" y="0" font-size="3.33" fill="#9a9a9a" stroke="#9a9a9a" stroke-width="0.25" textLength="10" lengthAdjust="spacingAndGlyphs">+3V3</text>
<text transform="translate(853.1,470) rotate(-90)" x="0" y="0" font-size="3.33" fill="#9a9a9a" stroke="#9a9a9a" stroke-width="0.25" textLength="7" lengthAdjust="spacingAndGlyphs">GND</text>
<line x1="661" y1="417.8" x2="702.5" y2="417.8" stroke="#48a848" stroke-width="0.75"/>
<line x1="709.3" y1="417.8" x2="764.3" y2="417.8" stroke="#48a848" stroke-width="0.75"/>
<circle cx="689.5" cy="417.8" r="1.2" fill="#0a8a0a"/>
<text x="664" y="417.8" font-size="5.45" fill="#1a1a1a" stroke="#1a1a1a" stroke-width="0.12" textLength="33.2" lengthAdjust="spacingAndGlyphs">I2C1A_SCL_33</text>
<text x="729" y="417.8" font-size="5.45" fill="#1a1a1a" stroke="#1a1a1a" stroke-width="0.12" textLength="30.4" lengthAdjust="spacingAndGlyphs">I2C1A_SCL_5</text>
<line x1="689.5" y1="417.8" x2="689.5" y2="423.8" stroke="#48a848" stroke-width="0.75"/>
<rect x="687" y="423.8" width="5" height="13.4" fill="none" stroke="#a03030" stroke-width="0.8"/>
<line x1="689.5" y1="437.2" x2="689.5" y2="447.8" stroke="#48a848" stroke-width="0.75"/>
<rect x="687" y="447.8" width="5" height="13.2" fill="none" stroke="#a03030" stroke-width="0.8"/>
<line x1="689.5" y1="461" x2="689.5" y2="467" stroke="#48a848" stroke-width="0.75"/>
<text x="677" y="428.2" font-size="5.76" fill="#159494" stroke="#159494" stroke-width="0.12" textLength="8.9" lengthAdjust="spacingAndGlyphs">R26</text>
<text x="677" y="460.4" font-size="5.76" fill="#159494" stroke="#159494" stroke-width="0.12" textLength="9" lengthAdjust="spacingAndGlyphs">R28</text>
<text transform="translate(696.1,440) rotate(-90)" x="0" y="0" font-size="3.33" fill="#159494" stroke="#159494" stroke-width="0.25" textLength="14" lengthAdjust="spacingAndGlyphs">10k/0402</text>
<text transform="translate(696.1,461) rotate(-90)" x="0" y="0" font-size="3.33" fill="#159494" stroke="#159494" stroke-width="0.25" textLength="13" lengthAdjust="spacingAndGlyphs">10k/0402</text>
<line x1="669.5" y1="442.7" x2="702.5" y2="442.7" stroke="#48a848" stroke-width="0.75"/>
<circle cx="689.5" cy="442.7" r="1.2" fill="#0a8a0a"/>
<circle cx="702.5" cy="442.7" r="1.2" fill="#0a8a0a"/>
<path d="M667.1 440.5 L663.6 442.7 L667.1 444.9 M663.6 442.7 H669.6" fill="none" stroke="#a03030" stroke-width="0.7"/>
<text transform="translate(662.9,449) rotate(-90)" x="0" y="0" font-size="5.76" fill="#159494" stroke="#159494" stroke-width="0.12" textLength="13" lengthAdjust="spacingAndGlyphs">+3.3V</text>
<text x="668" y="440.2" font-size="3.64" fill="#9a9a9a" stroke="#9a9a9a" stroke-width="0.25" textLength="9" lengthAdjust="spacingAndGlyphs">3V3</text>
<circle cx="705.9" cy="430.5" r="6.7" fill="none" stroke="#a03030" stroke-width="0.8"/>
<path d="M700.5 431.9 H711.5 M702 427.7 H710 M702 434.5 H710 M703 425.5 V428 M709 425.5 V428 M704.5 433 L706 429.7 L707.5 433 Z" fill="none" stroke="#a03030" stroke-width="0.8"/>
<rect x="700.5" y="430.7" width="11" height="1.4" fill="#a03030"/><rect x="703.5" y="429" width="5" height="2" fill="#a03030" opacity="0.7"/>
<circle cx="705.9" cy="453.6" r="6.7" fill="none" stroke="#a03030" stroke-width="0.8"/>
<path d="M700.5 452.2 H711.5 M702 456.4 H710 M702 449.6 H710 M703 448.6 V451.1 M709 448.6 V451.1 M704.5 456.1 L706 452.8 L707.5 456.1 Z" fill="none" stroke="#a03030" stroke-width="0.8"/>
<rect x="700.5" y="452" width="11" height="1.4" fill="#a03030"/><rect x="703.5" y="452.1" width="5" height="2" fill="#a03030" opacity="0.7"/>
<line x1="702.5" y1="417.8" x2="702.5" y2="424.5" stroke="#b04848" stroke-width="0.75"/>
<line x1="709.3" y1="417.8" x2="709.3" y2="424.5" stroke="#b04848" stroke-width="0.75"/>
<line x1="702.5" y1="436.5" x2="702.5" y2="447.5" stroke="#b04848" stroke-width="0.75"/>
<line x1="709.3" y1="436.5" x2="709.3" y2="447.5" stroke="#b04848" stroke-width="0.75"/>
<line x1="702.5" y1="459.5" x2="702.5" y2="467" stroke="#b04848" stroke-width="0.75"/>
<line x1="709.3" y1="459.5" x2="709.3" y2="467" stroke="#b04848" stroke-width="0.75"/>
<text x="703" y="421.7" font-size="3.64" fill="#a03030" stroke="#a03030" stroke-width="0.28" textLength="1.5" lengthAdjust="spacingAndGlyphs">2</text>
<text x="708.5" y="421.7" font-size="3.64" fill="#a03030" stroke="#a03030" stroke-width="0.28" textLength="1.5" lengthAdjust="spacingAndGlyphs">1</text>
<text x="715" y="425.3" font-size="6.36" fill="#159494" stroke="#159494" stroke-width="0.12" textLength="12.8" lengthAdjust="spacingAndGlyphs">FET2</text>
<text x="715" y="432.1" font-size="6.36" fill="#159494" stroke="#159494" stroke-width="0.12" textLength="22" lengthAdjust="spacingAndGlyphs">BSS138</text>
<text x="716.9" y="453.1" font-size="6.36" fill="#159494" stroke="#159494" stroke-width="0.12" textLength="13.1" lengthAdjust="spacingAndGlyphs">FET3</text>
<text x="716.9" y="459.4" font-size="6.36" fill="#159494" stroke="#159494" stroke-width="0.12" textLength="21.85" lengthAdjust="spacingAndGlyphs">BSS138</text>
<line x1="661" y1="467" x2="702.5" y2="467" stroke="#48a848" stroke-width="0.75"/>
<line x1="709.3" y1="467" x2="764.3" y2="467" stroke="#48a848" stroke-width="0.75"/>
<circle cx="689.5" cy="467" r="1.2" fill="#0a8a0a"/>
<text x="664" y="466.8" font-size="5.45" fill="#1a1a1a" stroke="#1a1a1a" stroke-width="0.12" textLength="33.2" lengthAdjust="spacingAndGlyphs">I2C1A_SDA_33</text>
<text x="725" y="466.8" font-size="5.45" fill="#1a1a1a" stroke="#1a1a1a" stroke-width="0.12" textLength="29.8" lengthAdjust="spacingAndGlyphs">I2C1A_SDA_5</text>
<path d="M268.8 477 L271 473.5 L273.2 477 M271 473.5 V479.5" fill="none" stroke="#a03030" stroke-width="0.7"/>
<text x="265" y="472.3" font-size="5.76" fill="#159494" stroke="#159494" stroke-width="0.12" textLength="13.9" lengthAdjust="spacingAndGlyphs">+3.3V</text>
<text transform="translate(268.6,485) rotate(-90)" x="0" y="0" font-size="3.33" fill="#9a9a9a" stroke="#9a9a9a" stroke-width="0.25" textLength="10" lengthAdjust="spacingAndGlyphs">+3V3</text>
<line x1="271" y1="479" x2="271" y2="486" stroke="#48a848" stroke-width="0.75"/>
<rect x="268.5" y="486" width="5" height="13.6" fill="none" stroke="#a03030" stroke-width="0.8"/>
<line x1="271" y1="499.6" x2="271" y2="511.6" stroke="#48a848" stroke-width="0.75"/>
<text transform="translate(266.3,499.5) rotate(-90)" x="0" y="0" font-size="5.45" fill="#159494" stroke="#159494" stroke-width="0.12" textLength="13" lengthAdjust="spacingAndGlyphs">R24</text>
<text transform="translate(278.4,502) rotate(-90)" x="0" y="0" font-size="3.33" fill="#159494" stroke="#159494" stroke-width="0.25" textLength="20" lengthAdjust="spacingAndGlyphs">10k/5%/0402</text>
<line x1="261.5" y1="511.6" x2="290.5" y2="511.6" stroke="#48a848" stroke-width="0.75"/>
<circle cx="271" cy="511.6" r="1.2" fill="#0a8a0a"/>
<text x="273.1" y="511" font-size="5.45" fill="#1a1a1a" stroke="#1a1a1a" stroke-width="0.12" textLength="17.4" lengthAdjust="spacingAndGlyphs">nRESET</text>
<path d="M271 511.6 V519.3 M271 537.8 V549 M271.2 522 L273.5 535 M273 528.5 H278.4 M278.4 526.5 V531" fill="none" stroke="#a03030" stroke-width="0.75"/>
<circle cx="271.2" cy="520.6" r="1.2" fill="none" stroke="#a03030" stroke-width="0.7"/>
<circle cx="271.2" cy="536.6" r="1.2" fill="none" stroke="#a03030" stroke-width="0.7"/>
<line x1="271" y1="549" x2="271" y2="554" stroke="#48a848" stroke-width="0.75"/>
<path d="M268.4 554.5 L271 558.5 L273.6 554.5 Z" fill="none" stroke="#a03030" stroke-width="0.7"/>
<text x="266.5" y="561.3" font-size="5.45" fill="#159494" stroke="#159494" stroke-width="0.12" textLength="9" lengthAdjust="spacingAndGlyphs">GND</text>
<text transform="translate(286.5,538.2) rotate(-90)" x="0" y="0" font-size="5.76" fill="#159494" stroke="#159494" stroke-width="0.12" textLength="13.9" lengthAdjust="spacingAndGlyphs">RST1</text>
<text transform="translate(266.1,548) rotate(-90)" x="0" y="0" font-size="3.33" fill="#159494" stroke="#159494" stroke-width="0.25" textLength="32" lengthAdjust="spacingAndGlyphs">SKHLLBA010(SMD)</text>
<rect x="446.8" y="498.75" width="19.7" height="37.5" fill="none" stroke="#a03030" stroke-width="0.8"/>
<text x="447.75" y="494.4" font-size="5.76" fill="#159494" stroke="#159494" stroke-width="0.12" textLength="17.85" lengthAdjust="spacingAndGlyphs">UEXT1</text>
<text x="447.75" y="545.9" font-size="5.76" fill="#159494" stroke="#159494" stroke-width="0.12" textLength="18.75" lengthAdjust="spacingAndGlyphs">BH10S</text>
<line x1="436" y1="503.4" x2="446.8" y2="503.4" stroke="#b04848" stroke-width="0.75"/>
<line x1="466.5" y1="503.4" x2="477" y2="503.4" stroke="#b04848" stroke-width="0.75"/>
<rect x="449" y="502.55" width="5.5" height="1.7" fill="#a03030"/><rect x="458.5" y="502.55" width="5.5" height="1.7" fill="#a03030"/>
<text x="441" y="502.9" font-size="5.45" fill="#a03030" stroke="#a03030" stroke-width="0.28" textLength="2.8" lengthAdjust="spacingAndGlyphs">1</text>
<text x="469.5" y="502.9" font-size="5.45" fill="#a03030" stroke="#a03030" stroke-width="0.28" textLength="2.8" lengthAdjust="spacingAndGlyphs">2</text>
<line x1="436" y1="509.65" x2="446.8" y2="509.65" stroke="#b04848" stroke-width="0.75"/>
<line x1="466.5" y1="509.65" x2="477" y2="509.65" stroke="#b04848" stroke-width="0.75"/>
<rect x="449" y="508.8" width="5.5" height="1.7" fill="#a03030"/><rect x="458.5" y="508.8" width="5.5" height="1.7" fill="#a03030"/>
<text x="441" y="509.15" font-size="5.45" fill="#a03030" stroke="#a03030" stroke-width="0.28" textLength="2.8" lengthAdjust="spacingAndGlyphs">3</text>
<text x="469.5" y="509.15" font-size="5.45" fill="#a03030" stroke="#a03030" stroke-width="0.28" textLength="2.8" lengthAdjust="spacingAndGlyphs">4</text>
<line x1="436" y1="515.9" x2="446.8" y2="515.9" stroke="#b04848" stroke-width="0.75"/>
<line x1="466.5" y1="515.9" x2="477" y2="515.9" stroke="#b04848" stroke-width="0.75"/>
<rect x="449" y="515.05" width="5.5" height="1.7" fill="#a03030"/><rect x="458.5" y="515.05" width="5.5" height="1.7" fill="#a03030"/>
<text x="441" y="515.4" font-size="5.45" fill="#a03030" stroke="#a03030" stroke-width="0.28" textLength="2.8" lengthAdjust="spacingAndGlyphs">5</text>
<text x="469.5" y="515.4" font-size="5.45" fill="#a03030" stroke="#a03030" stroke-width="0.28" textLength="2.8" lengthAdjust="spacingAndGlyphs">6</text>
<line x1="436" y1="522.15" x2="446.8" y2="522.15" stroke="#b04848" stroke-width="0.75"/>
<line x1="466.5" y1="522.15" x2="477" y2="522.15" stroke="#b04848" stroke-width="0.75"/>
<rect x="449" y="521.3" width="5.5" height="1.7" fill="#a03030"/><rect x="458.5" y="521.3" width="5.5" height="1.7" fill="#a03030"/>
<text x="441" y="521.65" font-size="5.45" fill="#a03030" stroke="#a03030" stroke-width="0.28" textLength="2.8" lengthAdjust="spacingAndGlyphs">7</text>
<text x="469.5" y="521.65" font-size="5.45" fill="#a03030" stroke="#a03030" stroke-width="0.28" textLength="2.8" lengthAdjust="spacingAndGlyphs">8</text>
<line x1="436" y1="528.4" x2="446.8" y2="528.4" stroke="#b04848" stroke-width="0.75"/>
<line x1="466.5" y1="528.4" x2="477" y2="528.4" stroke="#b04848" stroke-width="0.75"/>
<rect x="449" y="527.55" width="5.5" height="1.7" fill="#a03030"/><rect x="458.5" y="527.55" width="5.5" height="1.7" fill="#a03030"/>
<text x="441" y="527.9" font-size="5.45" fill="#a03030" stroke="#a03030" stroke-width="0.28" textLength="2.8" lengthAdjust="spacingAndGlyphs">9</text>
<text x="469.5" y="527.9" font-size="5.45" fill="#a03030" stroke="#a03030" stroke-width="0.28" textLength="5.6" lengthAdjust="spacingAndGlyphs">10</text>
<line x1="410" y1="509.65" x2="436" y2="509.65" stroke="#48a848" stroke-width="0.75"/>
<line x1="477" y1="509.65" x2="505" y2="509.65" stroke="#48a848" stroke-width="0.75"/>
<text x="412.4" y="509.35" font-size="5.45" fill="#1a1a1a" stroke="#1a1a1a" stroke-width="0.12" textLength="22.85" lengthAdjust="spacingAndGlyphs">UART1_TX</text>
<text x="478" y="509.35" font-size="5.45" fill="#1a1a1a" stroke="#1a1a1a" stroke-width="0.12" textLength="25.5" lengthAdjust="spacingAndGlyphs">UART1_RX</text>
<line x1="410" y1="515.9" x2="436" y2="515.9" stroke="#48a848" stroke-width="0.75"/>
<line x1="477" y1="515.9" x2="505" y2="515.9" stroke="#48a848" stroke-width="0.75"/>
<text x="412.4" y="515.6" font-size="5.45" fill="#1a1a1a" stroke="#1a1a1a" stroke-width="0.12" textLength="22.85" lengthAdjust="spacingAndGlyphs">I2C0_SCL</text>
<text x="478" y="515.6" font-size="5.45" fill="#1a1a1a" stroke="#1a1a1a" stroke-width="0.12" textLength="25.5" lengthAdjust="spacingAndGlyphs">I2C0_SDA</text>
<line x1="410" y1="522.15" x2="436" y2="522.15" stroke="#48a848" stroke-width="0.75"/>
<line x1="477" y1="522.15" x2="505" y2="522.15" stroke="#48a848" stroke-width="0.75"/>
<text x="412.4" y="521.85" font-size="5.45" fill="#1a1a1a" stroke="#1a1a1a" stroke-width="0.12" textLength="22.85" lengthAdjust="spacingAndGlyphs">SPI0_MISO</text>
<text x="478" y="521.85" font-size="5.45" fill="#1a1a1a" stroke="#1a1a1a" stroke-width="0.12" textLength="25.5" lengthAdjust="spacingAndGlyphs">SPI0_MOSI</text>
<line x1="410" y1="528.4" x2="436" y2="528.4" stroke="#48a848" stroke-width="0.75"/>
<line x1="477" y1="528.4" x2="505" y2="528.4" stroke="#48a848" stroke-width="0.75"/>
<text x="412.4" y="528.1" font-size="5.45" fill="#1a1a1a" stroke="#1a1a1a" stroke-width="0.12" textLength="22.85" lengthAdjust="spacingAndGlyphs">SPI0_CLK</text>
<text x="478" y="528.1" font-size="5.45" fill="#1a1a1a" stroke="#1a1a1a" stroke-width="0.12" textLength="25.5" lengthAdjust="spacingAndGlyphs">SPI0_CSn0</text>
<path d="M422.8 499.5 L425 496 L427.2 499.5 M425 496 V502" fill="none" stroke="#a03030" stroke-width="0.7"/>
<polyline fill="none" points="425,501 425,503.4 436,503.4" stroke="#48a848" stroke-width="0.75"/>
<text x="418.7" y="491.3" font-size="5.76" fill="#159494" stroke="#159494" stroke-width="0.12" textLength="14.05" lengthAdjust="spacingAndGlyphs">+3.3V</text>
<path d="M485.8 497 L488.4 493 L491 497 Z" fill="none" stroke="#a03030" stroke-width="0.7"/>
<polyline fill="none" points="488.4,497 488.4,503.4 477,503.4" stroke="#48a848" stroke-width="0.75"/>
<text x="483.4" y="491.3" font-size="5.76" fill="#159494" stroke="#159494" stroke-width="0.12" textLength="8.6" lengthAdjust="spacingAndGlyphs">GND</text>
<text transform="translate(423.1,501) rotate(-90)" x="0" y="0" font-size="3.33" fill="#9a9a9a" stroke="#9a9a9a" stroke-width="0.25" textLength="7" lengthAdjust="spacingAndGlyphs">+3V3</text>
<text transform="translate(486.1,500) rotate(-90)" x="0" y="0" font-size="3.33" fill="#9a9a9a" stroke="#9a9a9a" stroke-width="0.25" textLength="8" lengthAdjust="spacingAndGlyphs">GND</text>
<path d="M384.3 510 L386.5 506.5 L388.7 510 M386.5 506.5 V512.5" fill="none" stroke="#a03030" stroke-width="0.7"/>
<polyline fill="none" points="386.5,512 386.5,517.5 392.75,517.5" stroke="#48a848" stroke-width="0.75"/>
<rect x="392.75" y="515" width="12.5" height="5" fill="none" stroke="#a03030" stroke-width="0.8"/>
<line x1="405.25" y1="517.5" x2="436" y2="517.5" stroke="#48a848" stroke-width="0.75"/>
<text x="379.6" y="503.8" font-size="5.76" fill="#159494" stroke="#159494" stroke-width="0.12" textLength="14.1" lengthAdjust="spacingAndGlyphs">+3.3V</text>
<text x="394" y="526.3" font-size="5.76" fill="#159494" stroke="#159494" stroke-width="0.12" textLength="10" lengthAdjust="spacingAndGlyphs">R27</text>
<text x="392" y="512.35" font-size="3.33" fill="#159494" stroke="#159494" stroke-width="0.25" textLength="14" lengthAdjust="spacingAndGlyphs">10k/0402</text>
<line x1="477" y1="517.5" x2="508" y2="517.5" stroke="#48a848" stroke-width="0.75"/>
<rect x="508" y="515" width="13.25" height="5" fill="none" stroke="#a03030" stroke-width="0.8"/>
<polyline fill="none" points="521.25,517.5 526.9,517.5 526.9,512" stroke="#48a848" stroke-width="0.75"/>
<path d="M524.7 510 L526.9 506.5 L529.1 510 M526.9 506.5 V512.5" fill="none" stroke="#a03030" stroke-width="0.7"/>
<text x="520.6" y="503.8" font-size="5.76" fill="#159494" stroke="#159494" stroke-width="0.12" textLength="14.1" lengthAdjust="spacingAndGlyphs">+3.3V</text>
<text x="510" y="526.3" font-size="5.76" fill="#159494" stroke="#159494" stroke-width="0.12" textLength="10" lengthAdjust="spacingAndGlyphs">R15</text>
<text x="508" y="512.35" font-size="3.33" fill="#159494" stroke="#159494" stroke-width="0.25" textLength="14" lengthAdjust="spacingAndGlyphs">10k/0402</text>
<line x1="597.2" y1="486.25" x2="597.2" y2="544" stroke="#48a848" stroke-width="0.75"/>
<line x1="597.2" y1="486.25" x2="617" y2="486.25" stroke="#48a848" stroke-width="0.75"/>
<path d="M617.24 486.25 L620.6 483.85 L623.96 486.25 L620.6 488.65 Z" fill="none" stroke="#a03030" stroke-width="0.8"/>
<text x="625.3" y="488.05" font-size="5.45" fill="#159494" stroke="#159494" stroke-width="0.12" textLength="10.3" lengthAdjust="spacingAndGlyphs">MH4</text>
<line x1="597.2" y1="498.75" x2="617" y2="498.75" stroke="#48a848" stroke-width="0.75"/>
<path d="M617.24 498.75 L620.6 496.35 L623.96 498.75 L620.6 501.15 Z" fill="none" stroke="#a03030" stroke-width="0.8"/>
<text x="625.3" y="500.55" font-size="5.45" fill="#159494" stroke="#159494" stroke-width="0.12" textLength="10.3" lengthAdjust="spacingAndGlyphs">MH3</text>
<line x1="597.2" y1="511.25" x2="617" y2="511.25" stroke="#48a848" stroke-width="0.75"/>
<path d="M617.24 511.25 L620.6 508.85 L623.96 511.25 L620.6 513.65 Z" fill="none" stroke="#a03030" stroke-width="0.8"/>
<text x="625.3" y="513.05" font-size="5.45" fill="#159494" stroke="#159494" stroke-width="0.12" textLength="10.3" lengthAdjust="spacingAndGlyphs">MH1</text>
<line x1="597.2" y1="524.4" x2="617" y2="524.4" stroke="#48a848" stroke-width="0.75"/>
<path d="M617.24 524.4 L620.6 522 L623.96 524.4 L620.6 526.8 Z" fill="none" stroke="#a03030" stroke-width="0.8"/>
<text x="625.3" y="526.2" font-size="5.45" fill="#159494" stroke="#159494" stroke-width="0.12" textLength="10.3" lengthAdjust="spacingAndGlyphs">MH2</text>
<circle cx="597.2" cy="498.75" r="1.2" fill="#0a8a0a"/>
<circle cx="597.2" cy="511.25" r="1.2" fill="#0a8a0a"/>
<circle cx="597.2" cy="524.4" r="1.2" fill="#0a8a0a"/>
<path d="M594.6 544.5 L597.2 548.5 L599.8 544.5 Z" fill="none" stroke="#a03030" stroke-width="0.7"/>
<text x="591" y="554.3" font-size="5.45" fill="#159494" stroke="#159494" stroke-width="0.12" textLength="9" lengthAdjust="spacingAndGlyphs">GND</text>
<text transform="translate(595.1,543) rotate(-90)" x="0" y="0" font-size="3.33" fill="#9a9a9a" stroke="#9a9a9a" stroke-width="0.25" textLength="8" lengthAdjust="spacingAndGlyphs">GND</text></svg>
<div id="task" class="abs"></div>
<svg class="abs" style="left:0;top:560px" width="1024" height="16" viewBox="0 560 1024 16">
<g fill="#fff"><path d="M4.7 564.2 L9 563.6 V567.6 H4.7Z M9.6 563.5 L14 562.9 V567.6 H9.6Z M4.7 568.2 H9 V572.2 L4.7 571.6Z M9.6 568.2 H14 V572.9 L9.6 572.3Z"/></g>
<circle cx="29.5" cy="566.8" r="3.2" fill="none" stroke="#fff" stroke-width="1"/><path d="M27.2 569.2 L24.5 572" stroke="#fff" stroke-width="1.1"/>
<g><rect x="45.7" y="563.2" width="8.3" height="7" rx="0.8" fill="#8a8f8f"/><rect x="46.7" y="564.2" width="6.3" height="4.8" fill="#1e2a22"/><path d="M47 567 L49 565.5 L50.5 567 L52.5 565.5" stroke="#4ec04e" stroke-width="0.6" fill="none"/><rect x="48.5" y="570.2" width="2.8" height="1.3" fill="#aaa"/></g>
<g><rect x="65" y="563.5" width="8.3" height="8.5" rx="1" fill="#f4f4f4"/><rect x="65" y="563.5" width="8.3" height="1.5" fill="#3aa0e8"/><rect x="67" y="566" width="2" height="2" fill="#f25022"/><rect x="69.5" y="566" width="2" height="2" fill="#7fba00"/><rect x="67" y="568.5" width="2" height="2" fill="#00a4ef"/><rect x="69.5" y="568.5" width="2" height="2" fill="#ffb900"/></g>
<g><rect x="85" y="563.2" width="8.3" height="7" rx="0.8" fill="#8a8f8f"/><rect x="86" y="564.2" width="6.3" height="4.8" fill="#1e2a22"/><path d="M86.3 567 L88.3 565.5 L89.8 567 L91.8 565.5" stroke="#4ec04e" stroke-width="0.6" fill="none"/><rect x="87.8" y="570.2" width="2.8" height="1.3" fill="#aaa"/></g>
<g><path d="M104.8 569 A4 4 0 0 1 112.8 569" fill="none" stroke="#1030e0" stroke-width="1.3"/><rect x="104.3" y="568" width="2" height="3.5" fill="#1030e0"/><rect x="111.3" y="568" width="2" height="3.5" fill="#1030e0"/><circle cx="108.8" cy="570" r="2.3" fill="#f06010"/></g>
<path d="M125.5 566 Q128 563.5 131 565 V571.5 H129.5 V566.5 Q128 565.5 127 566.5 V571.5 H125.5Z" fill="#1aa8e0"/>
<g><rect x="144.5" y="563.5" width="7" height="5.5" fill="#f0d030"/><rect x="146" y="564.5" width="4" height="2.5" fill="#3040a0"/><rect x="143.5" y="569.5" width="9" height="1.5" fill="#ccc"/></g>
<g><circle cx="168" cy="567.6" r="4.2" fill="#db4437"/><path d="M168 567.6 L164.4 569.7 A4.2 4.2 0 0 0 171.6 569.7Z" fill="#0f9d58"/><path d="M168 567.6 L171.6 569.7 A4.2 4.2 0 0 0 168 563.4Z" fill="#f4b400"/><circle cx="168" cy="567.6" r="1.9" fill="#fff"/><circle cx="168" cy="567.6" r="1.4" fill="#4285f4"/></g>
<path d="M184 566 L187 565 L191.5 566.5 L190.5 571 L188 567.5 L185.5 568Z" fill="#3a9ee0"/>
<g><rect x="203" y="563.2" width="9" height="8" fill="#f4f4f4"/><rect x="204" y="564.5" width="7" height="3" fill="#111"/><path d="M205 567.5 V570 H207 V568.5 H209 V570.5 H211 V567.5Z" fill="#111"/></g>
<g><circle cx="227" cy="567.6" r="4" fill="#de5833"/><circle cx="227" cy="567.6" r="2.8" fill="#f0f0f0" opacity="0.35"/><path d="M226.5 565 Q228 566 227 570" stroke="#fff" stroke-width="0.9" fill="none"/><path d="M225.5 569.2 L228.5 569.6" stroke="#6bbf3a" stroke-width="1"/></g>
<g><path d="M243 569 Q242 565 246 563.8 Q250.5 563 251 566.5 Q249 566 249 569 Q247 572 243 569Z" fill="#b8c8e0"/><circle cx="245" cy="566.5" r="0.8" fill="#e04040"/><circle cx="247" cy="565" r="0.8" fill="#40a040"/><rect x="249.8" y="564.5" width="1.4" height="7" fill="#e8a020"/></g>
<g><rect x="262.2" y="563.2" width="8.6" height="8.5" fill="#0a0a0a"/><path d="M265.5 563.5 V569 M263.5 567 L265.5 570 L267.5 567" stroke="#18d0e0" stroke-width="1.3" fill="none"/></g>
<g><rect x="283" y="563.5" width="6" height="4.5" fill="#2040d0"/><rect x="284" y="564.5" width="4" height="2" fill="#e0e8ff"/><rect x="282.2" y="568.5" width="6.5" height="1.5" fill="#ddd"/><rect x="286" y="570" width="4.5" height="1.8" fill="#2040d0"/></g>
<path d="M303 565 L304.5 563.2 H311 V571.7 H302 L303 565Z" fill="#a8d8e8"/>
<rect x="316.2" y="560" width="19.3" height="16" fill="#3b4144"/>
<rect x="316.2" y="574.6" width="19.3" height="1.4" fill="#99e0f8"/>
<ellipse cx="325.8" cy="567.8" rx="3.6" ry="4.1" fill="none" stroke="#ff1b2d" stroke-width="1.7"/>
<g><path d="M341 564 H345 L346 565 H350 V571.5 H341Z" fill="#e8b830"/><rect x="341" y="566" width="9" height="5.5" fill="#f8d050"/><path d="M344 571.5 V569 H347 V571.5" stroke="#2a70c0" stroke-width="0.8" fill="none"/></g>
<path d="M952.3 570 L955.6 566.6 L959 570" fill="none" stroke="#ddd" stroke-width="0.8"/>
<g fill="none" stroke="#ddd" stroke-width="0.8"><rect x="966" y="565" width="6.5" height="4.5"/><path d="M968.5 569.5 V571.5 M966.5 571.5 H971"/><path d="M964.5 564.6 V570" stroke-width="0.6"/></g>
<text x="978.6" y="570.2" font-size="6.2" fill="#e8e8e8" font-family="Liberation Sans" textLength="13.5" lengthAdjust="spacingAndGlyphs">18:02</text>
<path d="M1002.3 564.3 H1010.7 V570.3 H1007.3 L1006.5 571.5 L1005.7 570.3 H1002.3Z" fill="none" stroke="#ddd" stroke-width="0.8"/>
<rect x="1021.3" y="560.5" width="0.7" height="15.5" fill="#5a5f62"/>
</svg>
</body></html>
